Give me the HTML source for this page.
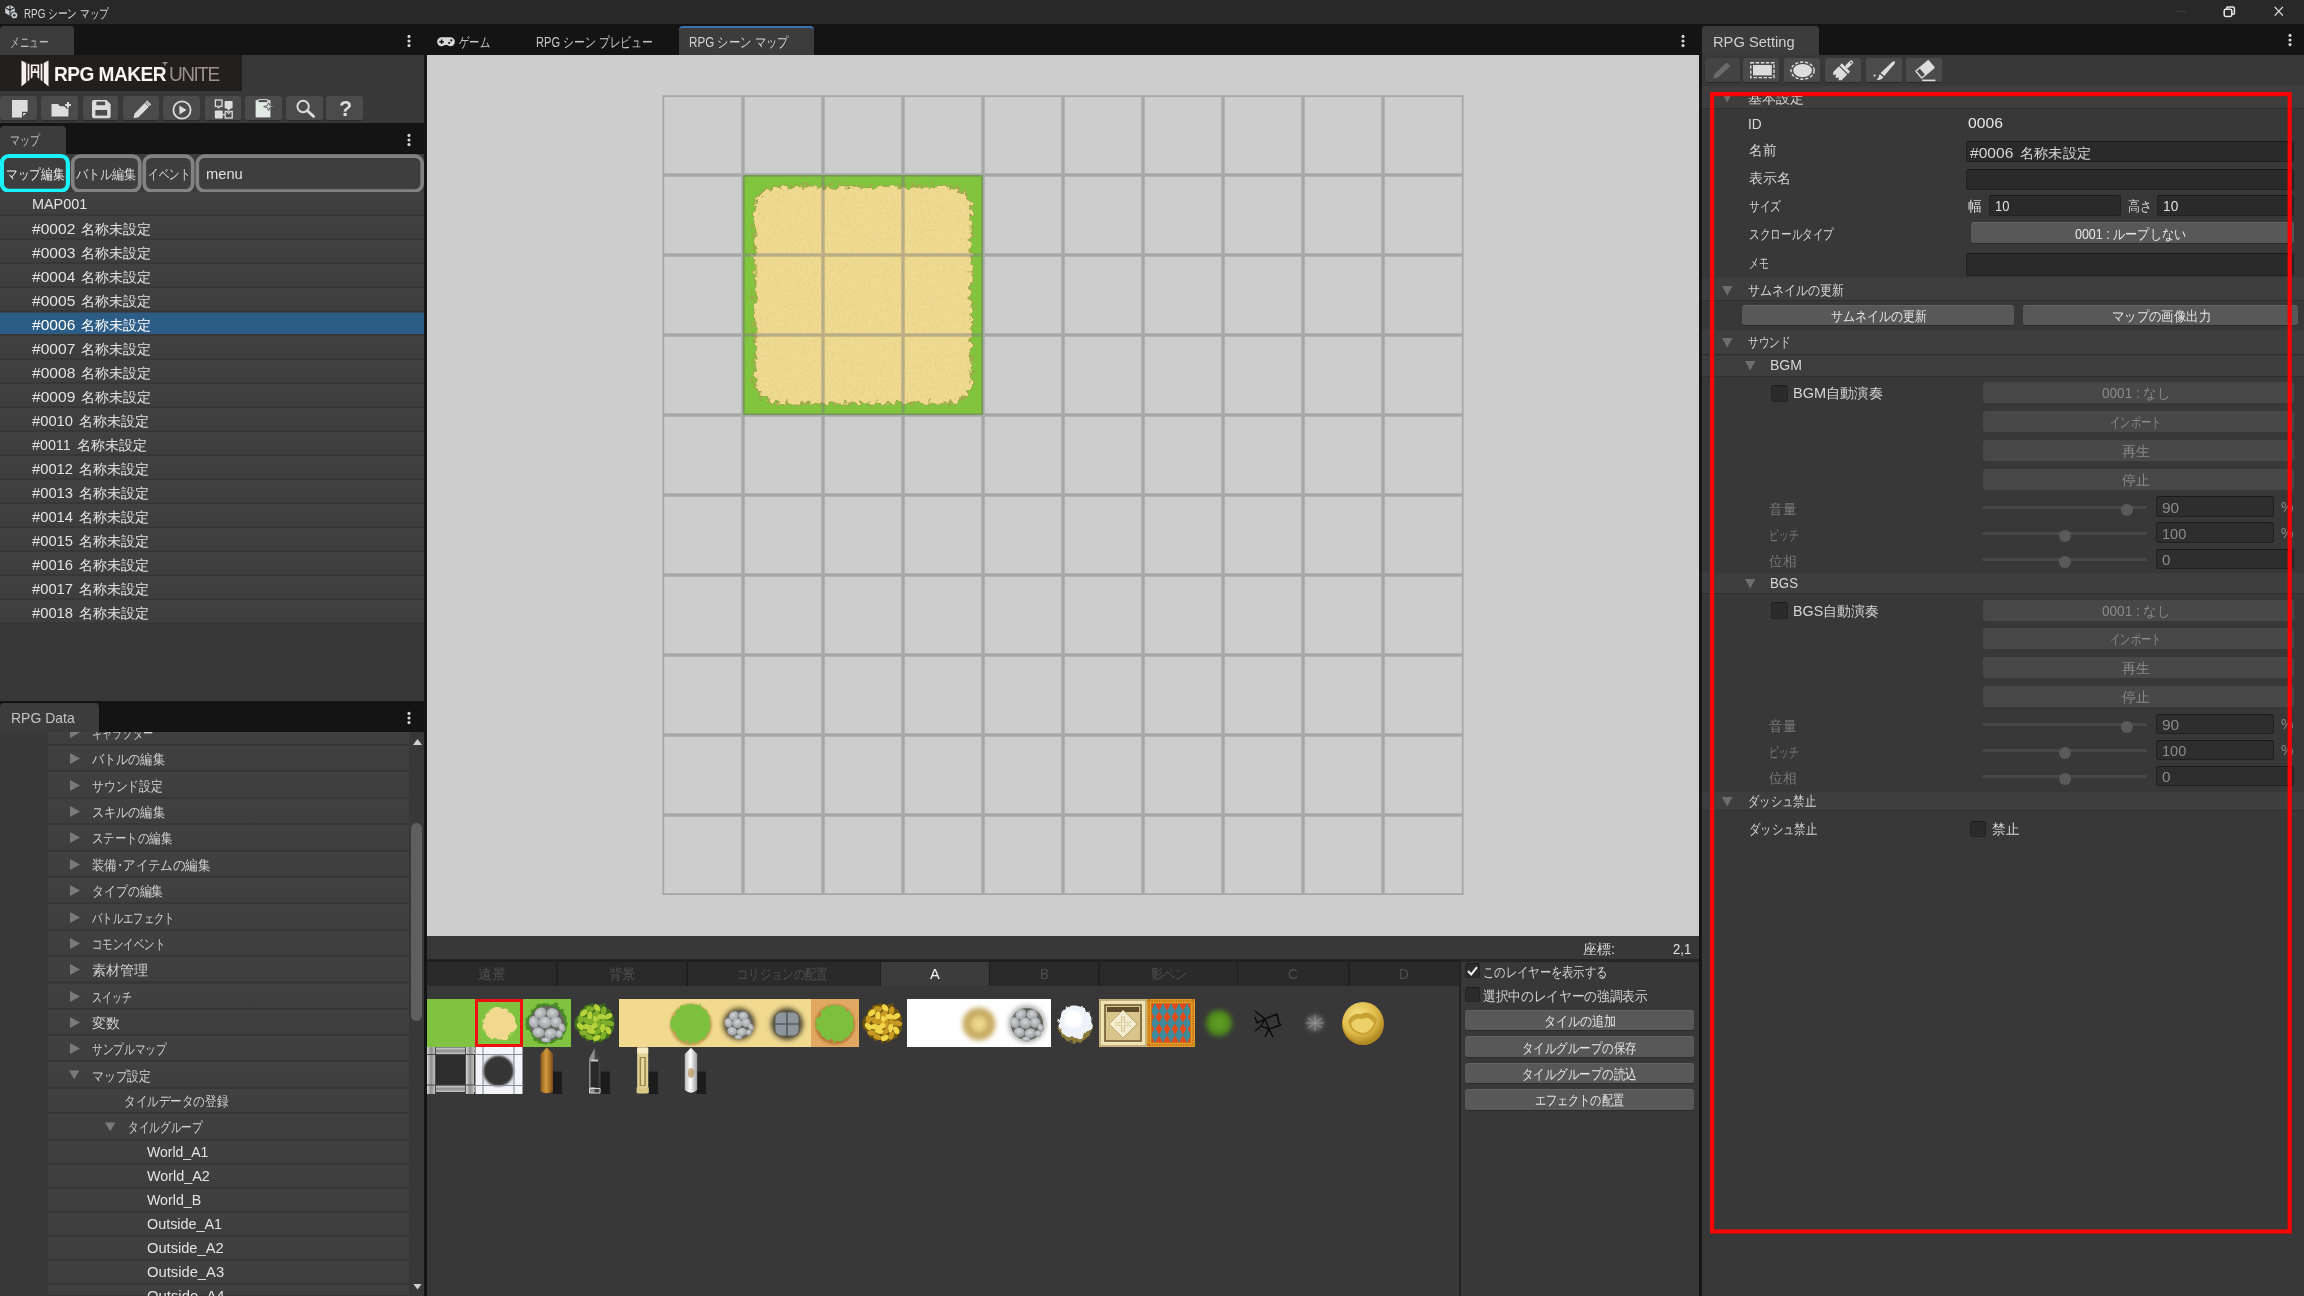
<!DOCTYPE html>
<html lang="ja"><head><meta charset="utf-8"><title>RPG シーン マップ</title>
<style>
html,body{margin:0;padding:0;background:#383838;}
body{width:2304px;height:1296px;position:relative;overflow:hidden;font-family:"Liberation Sans",sans-serif;font-size:14.4px;color:#d2d2d2;}
div{position:absolute;box-sizing:border-box;}
svg{position:absolute;overflow:visible;}
.t{height:24px;line-height:24px;white-space:nowrap;letter-spacing:0.45px;}
.j{letter-spacing:0;}
.row{left:0;width:424px;height:24px;background:linear-gradient(#414141,#3e3e3e);border-bottom:2px solid #373737;}
.trow{left:48px;width:360.7px;background:linear-gradient(#414141,#3e3e3e);border-bottom:2px solid #373737;}
.btn{background:#585858;border-radius:3px;border-top:1px solid #636363;border-bottom:1px solid #2b2b2b;color:#e4e4e4;text-align:center;white-space:nowrap;}
.dbtn{background:#484848;border-radius:3px;color:#8a8a8a;text-align:center;white-space:nowrap;}
.fld{background:#2a2a2a;border:1px solid #212121;border-top-color:#191919;border-radius:3px;white-space:nowrap;}
.tool{background:#4b4b4b;border-radius:3px;border-bottom:1px solid #2a2a2a;}
.chk{background:#2b2b2b;border:1px solid #242424;border-top-color:#1c1c1c;border-radius:3px;}
.hdr{background:#3e3e3e;border-bottom:1px solid #2f2f2f;}
</style></head>
<body>

<div style="left:0px;top:0px;width:2304px;height:24px;background:#282828;"></div>
<svg style="left:3px;top:4px" width="16" height="16" viewBox="0 0 16 16"><path d="M2.2 3.6 L7 1 L11.8 3.6 L11.8 9 L7 11.8 L2.2 9 Z" fill="#c9cdd3"/><path d="M7 1 L7 6.3 M2.2 3.6 L7 6.3 L11.8 3.6 M7 6.3 L7 11.8" stroke="#282828" stroke-width="1.1" fill="none"/><circle cx="11.3" cy="11.3" r="3.6" fill="#c9cdd3" stroke="#282828" stroke-width="1"/><circle cx="11.3" cy="11.3" r="1.3" fill="#282828"/></svg>
<div style="left:2175.6px;top:11px;width:10.8px;height:1.2px;background:#3d3d3d;"></div>
<svg style="left:2223px;top:6px" width="13" height="12" viewBox="0 0 13 12"><rect x="1.2" y="3.2" width="7.6" height="7.2" rx="1.6" fill="none" stroke="#e6e6e6" stroke-width="1.5"/><path d="M3.6 3 V2.2 Q3.6 1 4.8 1 H10 Q11.4 1 11.4 2.4 V7 Q11.4 8.2 10.2 8.2 H9" fill="none" stroke="#e6e6e6" stroke-width="1.5"/></svg>
<svg style="left:2273.8px;top:6.4px" width="9.6" height="10.5" viewBox="0 0 11 12"><path d="M0.8 1 L10.2 11 M10.2 1 L0.8 11" stroke="#e6e6e6" stroke-width="1.4" fill="none"/></svg>
<div style="left:0px;top:24px;width:2304px;height:31px;background:#141414;"></div>
<div style="left:424.2px;top:24px;width:2.8px;height:1272px;background:#151515;"></div>
<div style="left:1699px;top:24px;width:2.8px;height:1272px;background:#151515;"></div>
<div style="left:0px;top:26.3px;width:74px;height:29.2px;background:#3c3c3c;border-radius:4px 4px 0 0;"></div>
<svg style="left:406.5px;top:34px" width="4" height="14" viewBox="0 0 4 14"><circle cx="2" cy="2.4" r="1.55" fill="#d6d6d6"/><circle cx="2" cy="7" r="1.55" fill="#d6d6d6"/><circle cx="2" cy="11.6" r="1.55" fill="#d6d6d6"/></svg>
<div style="left:0px;top:55px;width:424px;height:69px;background:#383838;"></div>
<div style="left:0px;top:55px;width:242px;height:36px;background:#241f1f;"></div>
<div class="tool" style="left:0px;top:96px;width:37px;height:25px;"></div>
<div class="tool" style="left:41px;top:96px;width:37px;height:25px;"></div>
<div class="tool" style="left:82.5px;top:96px;width:35.5px;height:25px;"></div>
<div class="tool" style="left:123px;top:96px;width:36px;height:25px;"></div>
<div class="tool" style="left:163px;top:96px;width:37px;height:25px;"></div>
<div class="tool" style="left:204.5px;top:96px;width:36.0px;height:25px;"></div>
<div class="tool" style="left:245px;top:96px;width:36.5px;height:25px;"></div>
<div class="tool" style="left:285.5px;top:96px;width:37.0px;height:25px;"></div>
<div class="tool" style="left:326px;top:96px;width:37px;height:25px;"></div>
<div style="left:0px;top:123px;width:424px;height:31px;background:#141414;"></div>
<div style="left:0px;top:126px;width:66px;height:28px;background:#3c3c3c;border-radius:4px 4px 0 0;"></div>
<svg style="left:406.5px;top:133px" width="4" height="14" viewBox="0 0 4 14"><circle cx="2" cy="2.4" r="1.55" fill="#d6d6d6"/><circle cx="2" cy="7" r="1.55" fill="#d6d6d6"/><circle cx="2" cy="11.6" r="1.55" fill="#d6d6d6"/></svg>
<div style="left:0px;top:154px;width:424px;height:546px;background:#383838;"></div>
<div style="left:0px;top:153.6px;width:424px;height:39.4px;background:#3b3b3b;"></div>
<svg style="left:0;top:0" width="424" height="200" viewBox="0 0 424 200"><rect x="1.9000000000000001" y="156.0" width="66.0" height="34.8" rx="6.9" fill="#3e3e3e" stroke="#1af2fa" stroke-width="4.2"/><rect x="72.64999999999999" y="156.15" width="67.1" height="34.8" rx="7.15" fill="#3e3e3e" stroke="#828282" stroke-width="3.7"/><rect x="144.25" y="156.15" width="48.4" height="34.8" rx="7.15" fill="#3e3e3e" stroke="#828282" stroke-width="3.7"/><rect x="197.3" y="156.1" width="224.9" height="34.9" rx="7.2" fill="#3e3e3e" stroke="#828282" stroke-width="3.6"/></svg>
<div class="row" style="top:192.4px;"></div>
<div class="row" style="top:216.4px;"></div>
<div class="row" style="top:240.4px;"></div>
<div class="row" style="top:264.4px;"></div>
<div class="row" style="top:288.4px;"></div>
<div class="row" style="top:312.4px;background:#2c5d87;border-top:1px solid #37475a;"></div>
<div class="row" style="top:336.4px;"></div>
<div class="row" style="top:360.4px;"></div>
<div class="row" style="top:384.4px;"></div>
<div class="row" style="top:408.4px;"></div>
<div class="row" style="top:432.4px;"></div>
<div class="row" style="top:456.4px;"></div>
<div class="row" style="top:480.4px;"></div>
<div class="row" style="top:504.4px;"></div>
<div class="row" style="top:528.4px;"></div>
<div class="row" style="top:552.4px;"></div>
<div class="row" style="top:576.4px;"></div>
<div class="row" style="top:600.4px;"></div>
<div style="left:0px;top:701px;width:424px;height:31px;background:#141414;"></div>
<div style="left:0px;top:703px;width:99px;height:29px;background:#3c3c3c;border-radius:4px 4px 0 0;"></div>
<svg style="left:406.7px;top:710.8px" width="4" height="14" viewBox="0 0 4 14"><circle cx="2" cy="2.4" r="1.55" fill="#d6d6d6"/><circle cx="2" cy="7" r="1.55" fill="#d6d6d6"/><circle cx="2" cy="11.6" r="1.55" fill="#d6d6d6"/></svg>
<div style="left:0px;top:732px;width:424px;height:564px;background:#383838;"></div>
<div class="trow" style="top:732px;height:14px;"></div>
<div style="left:48px;top:732px;width:360px;height:12px;overflow:hidden;"><svg style="left:21.5px;top:-5px" width="10" height="11" viewBox="0 0 10 11"><path d="M0 0 L10 5.5 L0 11 Z" fill="#7a7a7a"/></svg></div>
<div class="trow" style="top:746px;height:26.3px;"></div>
<svg style="left:69.5px;top:753.05px" width="10" height="11" viewBox="0 0 10 11"><path d="M0 0 L10 5.5 L0 11 Z" fill="#7a7a7a"/></svg>
<div class="trow" style="top:772.3px;height:26.7px;"></div>
<svg style="left:69.5px;top:779.55px" width="10" height="11" viewBox="0 0 10 11"><path d="M0 0 L10 5.5 L0 11 Z" fill="#7a7a7a"/></svg>
<div class="trow" style="top:799px;height:26.3px;"></div>
<svg style="left:69.5px;top:806.05px" width="10" height="11" viewBox="0 0 10 11"><path d="M0 0 L10 5.5 L0 11 Z" fill="#7a7a7a"/></svg>
<div class="trow" style="top:825.3px;height:26.5px;"></div>
<svg style="left:69.5px;top:832.4499999999999px" width="10" height="11" viewBox="0 0 10 11"><path d="M0 0 L10 5.5 L0 11 Z" fill="#7a7a7a"/></svg>
<div class="trow" style="top:851.8px;height:26.2px;"></div>
<svg style="left:69.5px;top:858.8px" width="10" height="11" viewBox="0 0 10 11"><path d="M0 0 L10 5.5 L0 11 Z" fill="#7a7a7a"/></svg>
<div class="trow" style="top:878px;height:26.3px;"></div>
<svg style="left:69.5px;top:885.05px" width="10" height="11" viewBox="0 0 10 11"><path d="M0 0 L10 5.5 L0 11 Z" fill="#7a7a7a"/></svg>
<div class="trow" style="top:904.3px;height:26.7px;"></div>
<svg style="left:69.5px;top:911.55px" width="10" height="11" viewBox="0 0 10 11"><path d="M0 0 L10 5.5 L0 11 Z" fill="#7a7a7a"/></svg>
<div class="trow" style="top:931px;height:26.3px;"></div>
<svg style="left:69.5px;top:938.05px" width="10" height="11" viewBox="0 0 10 11"><path d="M0 0 L10 5.5 L0 11 Z" fill="#7a7a7a"/></svg>
<div class="trow" style="top:957.3px;height:26.2px;"></div>
<svg style="left:69.5px;top:964.3px" width="10" height="11" viewBox="0 0 10 11"><path d="M0 0 L10 5.5 L0 11 Z" fill="#7a7a7a"/></svg>
<div class="trow" style="top:983.5px;height:26.7px;"></div>
<svg style="left:69.5px;top:990.75px" width="10" height="11" viewBox="0 0 10 11"><path d="M0 0 L10 5.5 L0 11 Z" fill="#7a7a7a"/></svg>
<div class="trow" style="top:1010.2px;height:25.8px;"></div>
<svg style="left:69.5px;top:1017.0px" width="10" height="11" viewBox="0 0 10 11"><path d="M0 0 L10 5.5 L0 11 Z" fill="#7a7a7a"/></svg>
<div class="trow" style="top:1036px;height:26.3px;"></div>
<svg style="left:69.5px;top:1043.05px" width="10" height="11" viewBox="0 0 10 11"><path d="M0 0 L10 5.5 L0 11 Z" fill="#7a7a7a"/></svg>
<div class="trow" style="top:1062.3px;height:26.7px;"></div>
<svg style="left:69.2px;top:1070.05px" width="10.4" height="9.6" viewBox="0 0 12 10"><path d="M0 0 L12 0 L6 10 Z" fill="#7a7a7a"/></svg>
<div class="trow" style="top:1089px;height:25px;"></div>
<div class="trow" style="top:1114px;height:26.5px;"></div>
<svg style="left:104.5px;top:1121.6499999999999px" width="10.4" height="9.6" viewBox="0 0 12 10"><path d="M0 0 L12 0 L6 10 Z" fill="#7a7a7a"/></svg>
<div class="trow" style="top:1140.5px;height:24px;"></div>
<div class="trow" style="top:1164.5px;height:24px;"></div>
<div class="trow" style="top:1188.5px;height:24px;"></div>
<div class="trow" style="top:1212.5px;height:24px;"></div>
<div class="trow" style="top:1236.5px;height:24px;"></div>
<div class="trow" style="top:1260.5px;height:24px;"></div>
<div class="trow" style="top:1284.5px;height:12.5px;"></div>
<div style="left:408.7px;top:732px;width:15.3px;height:564px;background:#383838;"></div>
<svg style="left:412.5px;top:738.7px" width="9" height="6" viewBox="0 0 9 6"><path d="M0 6 L4.5 0 L9 6 Z" fill="#d0d0d0"/></svg>
<svg style="left:412.5px;top:1284px" width="9" height="5.5" viewBox="0 0 9 6"><path d="M0 0 L4.5 6 L9 0 Z" fill="#d0d0d0"/></svg>
<div style="left:411.2px;top:822.5px;width:11.3px;height:198px;background:#5f5f5f;border-radius:5.6px;"></div>
<svg style="left:437px;top:37px" width="18" height="10" viewBox="0 0 18 10"><path d="M4.6 0.3 H13.4 A4.4 4.4 0 0 1 13.4 9.2 Q11.6 9.2 10.6 7.9 H7.4 Q6.4 9.2 4.6 9.2 A4.4 4.4 0 0 1 4.6 0.3 Z" fill="#d8d8d8"/><path d="M4.6 2.4 V7 M2.3 4.7 H6.9" stroke="#141414" stroke-width="1.5"/><circle cx="14.3" cy="3.4" r="1.05" fill="#141414"/><circle cx="12.2" cy="5.9" r="1.05" fill="#141414"/></svg>
<div style="left:678.8px;top:26.3px;width:135.2px;height:28.7px;background:#3c3c3c;border-radius:4px 4px 0 0;border-top:2px solid #3a72b0;"></div>
<svg style="left:1681px;top:34px" width="4" height="14" viewBox="0 0 4 14"><circle cx="2" cy="2.4" r="1.55" fill="#d6d6d6"/><circle cx="2" cy="7" r="1.55" fill="#d6d6d6"/><circle cx="2" cy="11.6" r="1.55" fill="#d6d6d6"/></svg>
<div style="left:427px;top:55px;width:1272px;height:881px;background:#cdcdcd;"></div>
<svg style="left:743px;top:175px" width="240" height="240" viewBox="0 0 240 240"><defs><filter id="rg" x="-5%" y="-5%" width="110%" height="110%"><feTurbulence type="fractalNoise" baseFrequency="0.19" numOctaves="2" seed="4" result="n"/><feDisplacementMap in="SourceGraphic" in2="n" scale="12" xChannelSelector="R" yChannelSelector="G"/></filter><filter id="tx" x="0" y="0" width="100%" height="100%"><feTurbulence type="fractalNoise" baseFrequency="0.35" numOctaves="2" seed="9"/><feColorMatrix type="matrix" values="0 0 0 0 0.55  0 0 0 0 0.42  0 0 0 0 0.12  0.9 0 0 -0.38 0"/><feComposite in2="SourceGraphic" operator="in"/></filter></defs><rect width="240" height="240" fill="#81c53e"/><rect x="0.75" y="0.75" width="238.5" height="238.5" fill="none" stroke="#72b238" stroke-width="1.5"/><rect x="10.5" y="10.5" width="219" height="219" rx="24" fill="#a3a548" filter="url(#rg)" opacity="0.85"/><rect x="12.5" y="12.5" width="215" height="215" rx="23" fill="#f1dc93" filter="url(#rg)"/><rect x="12.5" y="12.5" width="215" height="215" rx="23" fill="#f1dc93" filter="url(#tx)" opacity="0.3"/></svg>
<svg style="left:0;top:0" width="2304" height="1296" viewBox="0 0 2304 1296" shape-rendering="geometricPrecision"><rect x="662.4" y="95.2" width="1.8" height="799.8" fill="rgba(122,122,122,0.46)"/><rect x="741.3" y="95.2" width="3.4" height="799.8" fill="rgba(122,122,122,0.46)"/><rect x="821.3" y="95.2" width="3.4" height="799.8" fill="rgba(122,122,122,0.46)"/><rect x="901.3" y="95.2" width="3.4" height="799.8" fill="rgba(122,122,122,0.46)"/><rect x="981.3" y="95.2" width="3.4" height="799.8" fill="rgba(122,122,122,0.46)"/><rect x="1061.3" y="95.2" width="3.4" height="799.8" fill="rgba(122,122,122,0.46)"/><rect x="1141.3" y="95.2" width="3.4" height="799.8" fill="rgba(122,122,122,0.46)"/><rect x="1221.3" y="95.2" width="3.4" height="799.8" fill="rgba(122,122,122,0.46)"/><rect x="1301.3" y="95.2" width="3.4" height="799.8" fill="rgba(122,122,122,0.46)"/><rect x="1381.3" y="95.2" width="3.4" height="799.8" fill="rgba(122,122,122,0.46)"/><rect x="1461.8" y="95.2" width="1.8" height="799.8" fill="rgba(122,122,122,0.46)"/><rect x="664.2" y="95.2" width="77.1" height="1.8" fill="rgba(122,122,122,0.46)"/><rect x="744.7" y="95.2" width="76.6" height="1.8" fill="rgba(122,122,122,0.46)"/><rect x="824.7" y="95.2" width="76.6" height="1.8" fill="rgba(122,122,122,0.46)"/><rect x="904.7" y="95.2" width="76.6" height="1.8" fill="rgba(122,122,122,0.46)"/><rect x="984.7" y="95.2" width="76.6" height="1.8" fill="rgba(122,122,122,0.46)"/><rect x="1064.7" y="95.2" width="76.6" height="1.8" fill="rgba(122,122,122,0.46)"/><rect x="1144.7" y="95.2" width="76.6" height="1.8" fill="rgba(122,122,122,0.46)"/><rect x="1224.7" y="95.2" width="76.6" height="1.8" fill="rgba(122,122,122,0.46)"/><rect x="1304.7" y="95.2" width="76.6" height="1.8" fill="rgba(122,122,122,0.46)"/><rect x="1384.7" y="95.2" width="77.1" height="1.8" fill="rgba(122,122,122,0.46)"/><rect x="664.2" y="173.3" width="77.1" height="3.4" fill="rgba(122,122,122,0.46)"/><rect x="744.7" y="173.3" width="76.6" height="3.4" fill="rgba(122,122,122,0.46)"/><rect x="824.7" y="173.3" width="76.6" height="3.4" fill="rgba(122,122,122,0.46)"/><rect x="904.7" y="173.3" width="76.6" height="3.4" fill="rgba(122,122,122,0.46)"/><rect x="984.7" y="173.3" width="76.6" height="3.4" fill="rgba(122,122,122,0.46)"/><rect x="1064.7" y="173.3" width="76.6" height="3.4" fill="rgba(122,122,122,0.46)"/><rect x="1144.7" y="173.3" width="76.6" height="3.4" fill="rgba(122,122,122,0.46)"/><rect x="1224.7" y="173.3" width="76.6" height="3.4" fill="rgba(122,122,122,0.46)"/><rect x="1304.7" y="173.3" width="76.6" height="3.4" fill="rgba(122,122,122,0.46)"/><rect x="1384.7" y="173.3" width="77.1" height="3.4" fill="rgba(122,122,122,0.46)"/><rect x="664.2" y="253.3" width="77.1" height="3.4" fill="rgba(122,122,122,0.46)"/><rect x="744.7" y="253.3" width="76.6" height="3.4" fill="rgba(122,122,122,0.46)"/><rect x="824.7" y="253.3" width="76.6" height="3.4" fill="rgba(122,122,122,0.46)"/><rect x="904.7" y="253.3" width="76.6" height="3.4" fill="rgba(122,122,122,0.46)"/><rect x="984.7" y="253.3" width="76.6" height="3.4" fill="rgba(122,122,122,0.46)"/><rect x="1064.7" y="253.3" width="76.6" height="3.4" fill="rgba(122,122,122,0.46)"/><rect x="1144.7" y="253.3" width="76.6" height="3.4" fill="rgba(122,122,122,0.46)"/><rect x="1224.7" y="253.3" width="76.6" height="3.4" fill="rgba(122,122,122,0.46)"/><rect x="1304.7" y="253.3" width="76.6" height="3.4" fill="rgba(122,122,122,0.46)"/><rect x="1384.7" y="253.3" width="77.1" height="3.4" fill="rgba(122,122,122,0.46)"/><rect x="664.2" y="333.3" width="77.1" height="3.4" fill="rgba(122,122,122,0.46)"/><rect x="744.7" y="333.3" width="76.6" height="3.4" fill="rgba(122,122,122,0.46)"/><rect x="824.7" y="333.3" width="76.6" height="3.4" fill="rgba(122,122,122,0.46)"/><rect x="904.7" y="333.3" width="76.6" height="3.4" fill="rgba(122,122,122,0.46)"/><rect x="984.7" y="333.3" width="76.6" height="3.4" fill="rgba(122,122,122,0.46)"/><rect x="1064.7" y="333.3" width="76.6" height="3.4" fill="rgba(122,122,122,0.46)"/><rect x="1144.7" y="333.3" width="76.6" height="3.4" fill="rgba(122,122,122,0.46)"/><rect x="1224.7" y="333.3" width="76.6" height="3.4" fill="rgba(122,122,122,0.46)"/><rect x="1304.7" y="333.3" width="76.6" height="3.4" fill="rgba(122,122,122,0.46)"/><rect x="1384.7" y="333.3" width="77.1" height="3.4" fill="rgba(122,122,122,0.46)"/><rect x="664.2" y="413.3" width="77.1" height="3.4" fill="rgba(122,122,122,0.46)"/><rect x="744.7" y="413.3" width="76.6" height="3.4" fill="rgba(122,122,122,0.46)"/><rect x="824.7" y="413.3" width="76.6" height="3.4" fill="rgba(122,122,122,0.46)"/><rect x="904.7" y="413.3" width="76.6" height="3.4" fill="rgba(122,122,122,0.46)"/><rect x="984.7" y="413.3" width="76.6" height="3.4" fill="rgba(122,122,122,0.46)"/><rect x="1064.7" y="413.3" width="76.6" height="3.4" fill="rgba(122,122,122,0.46)"/><rect x="1144.7" y="413.3" width="76.6" height="3.4" fill="rgba(122,122,122,0.46)"/><rect x="1224.7" y="413.3" width="76.6" height="3.4" fill="rgba(122,122,122,0.46)"/><rect x="1304.7" y="413.3" width="76.6" height="3.4" fill="rgba(122,122,122,0.46)"/><rect x="1384.7" y="413.3" width="77.1" height="3.4" fill="rgba(122,122,122,0.46)"/><rect x="664.2" y="493.3" width="77.1" height="3.4" fill="rgba(122,122,122,0.46)"/><rect x="744.7" y="493.3" width="76.6" height="3.4" fill="rgba(122,122,122,0.46)"/><rect x="824.7" y="493.3" width="76.6" height="3.4" fill="rgba(122,122,122,0.46)"/><rect x="904.7" y="493.3" width="76.6" height="3.4" fill="rgba(122,122,122,0.46)"/><rect x="984.7" y="493.3" width="76.6" height="3.4" fill="rgba(122,122,122,0.46)"/><rect x="1064.7" y="493.3" width="76.6" height="3.4" fill="rgba(122,122,122,0.46)"/><rect x="1144.7" y="493.3" width="76.6" height="3.4" fill="rgba(122,122,122,0.46)"/><rect x="1224.7" y="493.3" width="76.6" height="3.4" fill="rgba(122,122,122,0.46)"/><rect x="1304.7" y="493.3" width="76.6" height="3.4" fill="rgba(122,122,122,0.46)"/><rect x="1384.7" y="493.3" width="77.1" height="3.4" fill="rgba(122,122,122,0.46)"/><rect x="664.2" y="573.3" width="77.1" height="3.4" fill="rgba(122,122,122,0.46)"/><rect x="744.7" y="573.3" width="76.6" height="3.4" fill="rgba(122,122,122,0.46)"/><rect x="824.7" y="573.3" width="76.6" height="3.4" fill="rgba(122,122,122,0.46)"/><rect x="904.7" y="573.3" width="76.6" height="3.4" fill="rgba(122,122,122,0.46)"/><rect x="984.7" y="573.3" width="76.6" height="3.4" fill="rgba(122,122,122,0.46)"/><rect x="1064.7" y="573.3" width="76.6" height="3.4" fill="rgba(122,122,122,0.46)"/><rect x="1144.7" y="573.3" width="76.6" height="3.4" fill="rgba(122,122,122,0.46)"/><rect x="1224.7" y="573.3" width="76.6" height="3.4" fill="rgba(122,122,122,0.46)"/><rect x="1304.7" y="573.3" width="76.6" height="3.4" fill="rgba(122,122,122,0.46)"/><rect x="1384.7" y="573.3" width="77.1" height="3.4" fill="rgba(122,122,122,0.46)"/><rect x="664.2" y="653.3" width="77.1" height="3.4" fill="rgba(122,122,122,0.46)"/><rect x="744.7" y="653.3" width="76.6" height="3.4" fill="rgba(122,122,122,0.46)"/><rect x="824.7" y="653.3" width="76.6" height="3.4" fill="rgba(122,122,122,0.46)"/><rect x="904.7" y="653.3" width="76.6" height="3.4" fill="rgba(122,122,122,0.46)"/><rect x="984.7" y="653.3" width="76.6" height="3.4" fill="rgba(122,122,122,0.46)"/><rect x="1064.7" y="653.3" width="76.6" height="3.4" fill="rgba(122,122,122,0.46)"/><rect x="1144.7" y="653.3" width="76.6" height="3.4" fill="rgba(122,122,122,0.46)"/><rect x="1224.7" y="653.3" width="76.6" height="3.4" fill="rgba(122,122,122,0.46)"/><rect x="1304.7" y="653.3" width="76.6" height="3.4" fill="rgba(122,122,122,0.46)"/><rect x="1384.7" y="653.3" width="77.1" height="3.4" fill="rgba(122,122,122,0.46)"/><rect x="664.2" y="733.3" width="77.1" height="3.4" fill="rgba(122,122,122,0.46)"/><rect x="744.7" y="733.3" width="76.6" height="3.4" fill="rgba(122,122,122,0.46)"/><rect x="824.7" y="733.3" width="76.6" height="3.4" fill="rgba(122,122,122,0.46)"/><rect x="904.7" y="733.3" width="76.6" height="3.4" fill="rgba(122,122,122,0.46)"/><rect x="984.7" y="733.3" width="76.6" height="3.4" fill="rgba(122,122,122,0.46)"/><rect x="1064.7" y="733.3" width="76.6" height="3.4" fill="rgba(122,122,122,0.46)"/><rect x="1144.7" y="733.3" width="76.6" height="3.4" fill="rgba(122,122,122,0.46)"/><rect x="1224.7" y="733.3" width="76.6" height="3.4" fill="rgba(122,122,122,0.46)"/><rect x="1304.7" y="733.3" width="76.6" height="3.4" fill="rgba(122,122,122,0.46)"/><rect x="1384.7" y="733.3" width="77.1" height="3.4" fill="rgba(122,122,122,0.46)"/><rect x="664.2" y="813.3" width="77.1" height="3.4" fill="rgba(122,122,122,0.46)"/><rect x="744.7" y="813.3" width="76.6" height="3.4" fill="rgba(122,122,122,0.46)"/><rect x="824.7" y="813.3" width="76.6" height="3.4" fill="rgba(122,122,122,0.46)"/><rect x="904.7" y="813.3" width="76.6" height="3.4" fill="rgba(122,122,122,0.46)"/><rect x="984.7" y="813.3" width="76.6" height="3.4" fill="rgba(122,122,122,0.46)"/><rect x="1064.7" y="813.3" width="76.6" height="3.4" fill="rgba(122,122,122,0.46)"/><rect x="1144.7" y="813.3" width="76.6" height="3.4" fill="rgba(122,122,122,0.46)"/><rect x="1224.7" y="813.3" width="76.6" height="3.4" fill="rgba(122,122,122,0.46)"/><rect x="1304.7" y="813.3" width="76.6" height="3.4" fill="rgba(122,122,122,0.46)"/><rect x="1384.7" y="813.3" width="77.1" height="3.4" fill="rgba(122,122,122,0.46)"/><rect x="664.2" y="893.2" width="77.1" height="1.8" fill="rgba(122,122,122,0.46)"/><rect x="744.7" y="893.2" width="76.6" height="1.8" fill="rgba(122,122,122,0.46)"/><rect x="824.7" y="893.2" width="76.6" height="1.8" fill="rgba(122,122,122,0.46)"/><rect x="904.7" y="893.2" width="76.6" height="1.8" fill="rgba(122,122,122,0.46)"/><rect x="984.7" y="893.2" width="76.6" height="1.8" fill="rgba(122,122,122,0.46)"/><rect x="1064.7" y="893.2" width="76.6" height="1.8" fill="rgba(122,122,122,0.46)"/><rect x="1144.7" y="893.2" width="76.6" height="1.8" fill="rgba(122,122,122,0.46)"/><rect x="1224.7" y="893.2" width="76.6" height="1.8" fill="rgba(122,122,122,0.46)"/><rect x="1304.7" y="893.2" width="76.6" height="1.8" fill="rgba(122,122,122,0.46)"/><rect x="1384.7" y="893.2" width="77.1" height="1.8" fill="rgba(122,122,122,0.46)"/></svg>
<div style="left:427px;top:936px;width:1272px;height:24px;background:#383838;"></div>
<div style="left:427px;top:959px;width:1272px;height:2.5px;background:#262626;"></div>
<div style="left:427px;top:961.5px;width:1272px;height:334.5px;background:#383838;"></div>
<div style="left:427px;top:960px;width:1032px;height:26px;background:#1f1f1f;"></div>
<div style="left:427px;top:962px;width:129px;height:23.5px;background:#2a2a2a;"></div>
<div style="left:558px;top:962px;width:128.4px;height:23.5px;background:#2a2a2a;"></div>
<div style="left:688px;top:962px;width:191.5px;height:23.5px;background:#2a2a2a;"></div>
<div style="left:880.7px;top:962px;width:108.3px;height:24px;background:#3c3c3c;"></div>
<div style="left:990.3px;top:962px;width:108.2px;height:23.5px;background:#2a2a2a;"></div>
<div style="left:1099.8px;top:962px;width:136.9px;height:23.5px;background:#2a2a2a;"></div>
<div style="left:1238px;top:962px;width:110.3px;height:23.5px;background:#2a2a2a;"></div>
<div style="left:1349.5px;top:962px;width:109.0px;height:23.5px;background:#2a2a2a;"></div>
<div style="left:1459px;top:961px;width:2px;height:335px;background:#242424;"></div>
<div class="chk" style="left:1465px;top:963px;width:15px;height:15px;"></div>
<svg style="left:1467px;top:966px" width="11" height="10" viewBox="0 0 11 10"><path d="M1 5 L4.2 8.4 L10 1.2" stroke="#f2f2f2" stroke-width="2" fill="none"/></svg>
<div class="chk" style="left:1465px;top:987px;width:15px;height:15px;"></div>
<div class="btn" style="left:1465px;top:1010px;width:229px;height:21.3px;"></div>
<div class="btn" style="left:1465px;top:1036.4px;width:229px;height:21.4px;"></div>
<div class="btn" style="left:1465px;top:1063px;width:229px;height:21.2px;"></div>
<div class="btn" style="left:1465px;top:1089px;width:229px;height:21.5px;"></div>
<svg width="0" height="0" style="left:0;top:0"><defs><filter id="b1" x="-20%" y="-20%" width="140%" height="140%"><feGaussianBlur stdDeviation="1.2"/></filter><filter id="b2" x="-30%" y="-30%" width="160%" height="160%"><feGaussianBlur stdDeviation="2.6"/></filter><filter id="b3" x="-30%" y="-30%" width="160%" height="160%"><feGaussianBlur stdDeviation="4"/></filter><filter id="rg2" x="-10%" y="-10%" width="120%" height="120%"><feTurbulence type="fractalNoise" baseFrequency="0.16" numOctaves="2" seed="7" result="n"/><feDisplacementMap in="SourceGraphic" in2="n" scale="7" xChannelSelector="R" yChannelSelector="G"/></filter><radialGradient id="stn" cx="0.45" cy="0.4" r="0.6"><stop offset="0" stop-color="#d2d4d6"/><stop offset="1" stop-color="#9a9ea2"/></radialGradient><radialGradient id="gold" cx="0.4" cy="0.35" r="0.7"><stop offset="0" stop-color="#f6e48a"/><stop offset="0.6" stop-color="#e0bc4a"/><stop offset="1" stop-color="#a8821e"/></radialGradient><linearGradient id="wood" x1="0" x2="1"><stop offset="0" stop-color="#8a5a1c"/><stop offset="0.45" stop-color="#d29a3c"/><stop offset="1" stop-color="#7a4c14"/></linearGradient><linearGradient id="cry" x1="0" x2="1"><stop offset="0" stop-color="#b8b8b8"/><stop offset="0.45" stop-color="#ffffff"/><stop offset="1" stop-color="#9a9a9a"/></linearGradient><linearGradient id="met" x1="0" x2="0" y1="0" y2="1"><stop offset="0" stop-color="#d8d8d8"/><stop offset="0.5" stop-color="#8c8c8c"/><stop offset="1" stop-color="#c2c2c2"/></linearGradient><linearGradient id="metv" x1="0" x2="1" y1="0" y2="0"><stop offset="0" stop-color="#d8d8d8"/><stop offset="0.5" stop-color="#8c8c8c"/><stop offset="1" stop-color="#c2c2c2"/></linearGradient><pattern id="carp" width="8" height="12" patternUnits="userSpaceOnUse"><rect width="8" height="12" fill="#3f8b9a"/><path d="M4 0.5 L7.4 6 L4 11.5 L0.6 6 Z" fill="#e24a1c"/></pattern></defs></svg>
<svg style="left:427px;top:999px" width="48" height="48" viewBox="0 0 48 48"><rect width="48" height="48" fill="#80c340"/></svg>
<svg style="left:475px;top:999px" width="48" height="48" viewBox="0 0 48 48"><rect width="48" height="48" fill="#80c340"/><circle cx="24" cy="25" r="16.5" fill="#f0d98f" filter="url(#rg2)"/><rect x="1.5" y="1.5" width="45" height="45" fill="none" stroke="#ee1010" stroke-width="3"/></svg>
<svg style="left:523px;top:999px" width="48" height="48" viewBox="0 0 48 48"><rect width="48" height="48" fill="#80c340"/><circle cx="24" cy="24.5" r="20.5" fill="#4c8a2a" filter="url(#rg2)"/><circle cx="24" cy="24.5" r="17.5" fill="#66675f"/><ellipse cx="17.5" cy="14.0" rx="6.2" ry="5.2" fill="url(#stn)" transform="rotate(-30 17.5 14.0)"/><ellipse cx="29.5" cy="14.5" rx="6.0" ry="5.4" fill="url(#stn)" transform="rotate(7 29.5 14.5)"/><ellipse cx="11.0" cy="23.0" rx="5.0" ry="6.0" fill="url(#stn)" transform="rotate(-16 11.0 23.0)"/><ellipse cx="22.0" cy="23.5" rx="6.4" ry="6.0" fill="url(#stn)" transform="rotate(21 22.0 23.5)"/><ellipse cx="33.0" cy="23.0" rx="5.6" ry="5.6" fill="url(#stn)" transform="rotate(-2 33.0 23.0)"/><ellipse cx="39.0" cy="28.5" rx="3.2" ry="4.4" fill="url(#stn)" transform="rotate(-25 39.0 28.5)"/><ellipse cx="15.5" cy="33.5" rx="6.0" ry="5.2" fill="url(#stn)" transform="rotate(12 15.5 33.5)"/><ellipse cx="27.5" cy="34.5" rx="6.2" ry="5.2" fill="url(#stn)" transform="rotate(-11 27.5 34.5)"/><ellipse cx="36.0" cy="35.0" rx="3.6" ry="3.6" fill="url(#stn)" transform="rotate(26 36.0 35.0)"/><ellipse cx="23.0" cy="41.0" rx="4.6" ry="2.6" fill="url(#stn)" transform="rotate(3 23.0 41.0)"/></svg>
<svg style="left:571px;top:999px" width="48" height="48" viewBox="0 0 48 48"><circle cx="24" cy="24" r="19.5" fill="#3f6e1c" filter="url(#rg2)"/><ellipse cx="12.6" cy="33.8" rx="4.2" ry="2.7" fill="#7fae2a" transform="rotate(0 12.6 33.8)"/><ellipse cx="9.4" cy="27.3" rx="4.2" ry="2.7" fill="#b6d23a" transform="rotate(47 9.4 27.3)"/><ellipse cx="9.5" cy="20.2" rx="4.2" ry="2.7" fill="#7fae2a" transform="rotate(94 9.5 20.2)"/><ellipse cx="12.9" cy="13.9" rx="4.2" ry="2.7" fill="#b6d23a" transform="rotate(141 12.9 13.9)"/><ellipse cx="18.9" cy="9.9" rx="4.2" ry="2.7" fill="#7fae2a" transform="rotate(8 18.9 9.9)"/><ellipse cx="26.1" cy="9.1" rx="4.2" ry="2.7" fill="#b6d23a" transform="rotate(55 26.1 9.1)"/><ellipse cx="32.7" cy="11.8" rx="4.2" ry="2.7" fill="#7fae2a" transform="rotate(102 32.7 11.8)"/><ellipse cx="37.4" cy="17.3" rx="4.2" ry="2.7" fill="#b6d23a" transform="rotate(149 37.4 17.3)"/><ellipse cx="39.0" cy="24.3" rx="4.2" ry="2.7" fill="#7fae2a" transform="rotate(16 39.0 24.3)"/><ellipse cx="37.2" cy="31.2" rx="4.2" ry="2.7" fill="#b6d23a" transform="rotate(63 37.2 31.2)"/><ellipse cx="32.3" cy="36.5" rx="4.2" ry="2.7" fill="#7fae2a" transform="rotate(110 32.3 36.5)"/><ellipse cx="25.6" cy="38.9" rx="4.2" ry="2.7" fill="#b6d23a" transform="rotate(157 25.6 38.9)"/><ellipse cx="18.4" cy="37.9" rx="4.2" ry="2.7" fill="#7fae2a" transform="rotate(24 18.4 37.9)"/><ellipse cx="15.8" cy="27.7" rx="4.2" ry="2.7" fill="#b6d23a" transform="rotate(0 15.8 27.7)"/><ellipse cx="15.3" cy="21.6" rx="4.2" ry="2.7" fill="#7fae2a" transform="rotate(47 15.3 21.6)"/><ellipse cx="18.9" cy="16.6" rx="4.2" ry="2.7" fill="#b6d23a" transform="rotate(94 18.9 16.6)"/><ellipse cx="24.9" cy="15.0" rx="4.2" ry="2.7" fill="#7fae2a" transform="rotate(141 24.9 15.0)"/><ellipse cx="30.4" cy="17.7" rx="4.2" ry="2.7" fill="#b6d23a" transform="rotate(8 30.4 17.7)"/><ellipse cx="33.0" cy="23.3" rx="4.2" ry="2.7" fill="#7fae2a" transform="rotate(55 33.0 23.3)"/><ellipse cx="31.3" cy="29.2" rx="4.2" ry="2.7" fill="#b6d23a" transform="rotate(102 31.3 29.2)"/><ellipse cx="26.2" cy="32.7" rx="4.2" ry="2.7" fill="#7fae2a" transform="rotate(149 26.2 32.7)"/><ellipse cx="20.1" cy="32.1" rx="4.2" ry="2.7" fill="#b6d23a" transform="rotate(16 20.1 32.1)"/><ellipse cx="20.7" cy="22.8" rx="4.2" ry="2.7" fill="#7fae2a" transform="rotate(0 20.7 22.8)"/><ellipse cx="25.2" cy="20.7" rx="4.2" ry="2.7" fill="#b6d23a" transform="rotate(47 25.2 20.7)"/><ellipse cx="27.3" cy="25.2" rx="4.2" ry="2.7" fill="#7fae2a" transform="rotate(94 27.3 25.2)"/><ellipse cx="22.8" cy="27.3" rx="4.2" ry="2.7" fill="#b6d23a" transform="rotate(141 22.8 27.3)"/></svg>
<svg style="left:619px;top:999px" width="48" height="48" viewBox="0 0 48 48"><rect width="48" height="48" fill="#f1da90"/></svg>
<svg style="left:667px;top:999px" width="48" height="48" viewBox="0 0 48 48"><rect width="48" height="48" fill="#f1da90"/><circle cx="24" cy="25.5" r="21" fill="#c0a050" filter="url(#b1)"/><circle cx="24" cy="24.5" r="19.5" fill="#7cc03d" filter="url(#rg2)"/></svg>
<svg style="left:715px;top:999px" width="48" height="48" viewBox="0 0 48 48"><rect width="48" height="48" fill="#f1da90"/><circle cx="24" cy="25" r="16.0" fill="#55482a" filter="url(#b2)"/><circle cx="24" cy="25" r="14.0" fill="#66675f"/><ellipse cx="18.8" cy="16.6" rx="5.0" ry="4.2" fill="url(#stn)" transform="rotate(-30 18.8 16.6)"/><ellipse cx="28.4" cy="17.0" rx="4.8" ry="4.3" fill="url(#stn)" transform="rotate(7 28.4 17.0)"/><ellipse cx="13.6" cy="23.8" rx="4.0" ry="4.8" fill="url(#stn)" transform="rotate(-16 13.6 23.8)"/><ellipse cx="22.4" cy="24.2" rx="5.1" ry="4.8" fill="url(#stn)" transform="rotate(21 22.4 24.2)"/><ellipse cx="31.2" cy="23.8" rx="4.5" ry="4.5" fill="url(#stn)" transform="rotate(-2 31.2 23.8)"/><ellipse cx="36.0" cy="28.2" rx="2.6" ry="3.5" fill="url(#stn)" transform="rotate(-25 36.0 28.2)"/><ellipse cx="17.2" cy="32.2" rx="4.8" ry="4.2" fill="url(#stn)" transform="rotate(12 17.2 32.2)"/><ellipse cx="26.8" cy="33.0" rx="5.0" ry="4.2" fill="url(#stn)" transform="rotate(-11 26.8 33.0)"/><ellipse cx="33.6" cy="33.4" rx="2.9" ry="2.9" fill="url(#stn)" transform="rotate(26 33.6 33.4)"/><ellipse cx="23.2" cy="38.2" rx="3.7" ry="2.1" fill="url(#stn)" transform="rotate(3 23.2 38.2)"/></svg>
<svg style="left:763px;top:999px" width="48" height="48" viewBox="0 0 48 48"><rect width="48" height="48" fill="#f1da90"/><circle cx="24" cy="25" r="16" fill="#4a4230" filter="url(#b2)"/><rect x="12" y="13" width="24" height="24" rx="6" fill="#8e949c"/><path d="M24 13 V37 M12 25 H36" stroke="#555a60" stroke-width="1.6"/><rect x="12" y="13" width="24" height="24" rx="6" fill="none" stroke="#5a5648" stroke-width="1"/></svg>
<svg style="left:811px;top:999px" width="48" height="48" viewBox="0 0 48 48"><rect width="48" height="48" fill="#e0a862"/><circle cx="24" cy="25.5" r="20" fill="#b77c38" filter="url(#b1)"/><circle cx="24" cy="24.5" r="18.5" fill="#7cc03d" filter="url(#rg2)"/></svg>
<svg style="left:859px;top:999px" width="48" height="48" viewBox="0 0 48 48"><circle cx="24" cy="24" r="19.5" fill="#6e5410" filter="url(#rg2)"/><ellipse cx="12.6" cy="33.8" rx="4.2" ry="2.7" fill="#c69a22" transform="rotate(0 12.6 33.8)"/><ellipse cx="9.4" cy="27.3" rx="4.2" ry="2.7" fill="#f2d64a" transform="rotate(47 9.4 27.3)"/><ellipse cx="9.5" cy="20.2" rx="4.2" ry="2.7" fill="#c69a22" transform="rotate(94 9.5 20.2)"/><ellipse cx="12.9" cy="13.9" rx="4.2" ry="2.7" fill="#f2d64a" transform="rotate(141 12.9 13.9)"/><ellipse cx="18.9" cy="9.9" rx="4.2" ry="2.7" fill="#c69a22" transform="rotate(8 18.9 9.9)"/><ellipse cx="26.1" cy="9.1" rx="4.2" ry="2.7" fill="#f2d64a" transform="rotate(55 26.1 9.1)"/><ellipse cx="32.7" cy="11.8" rx="4.2" ry="2.7" fill="#c69a22" transform="rotate(102 32.7 11.8)"/><ellipse cx="37.4" cy="17.3" rx="4.2" ry="2.7" fill="#f2d64a" transform="rotate(149 37.4 17.3)"/><ellipse cx="39.0" cy="24.3" rx="4.2" ry="2.7" fill="#c69a22" transform="rotate(16 39.0 24.3)"/><ellipse cx="37.2" cy="31.2" rx="4.2" ry="2.7" fill="#f2d64a" transform="rotate(63 37.2 31.2)"/><ellipse cx="32.3" cy="36.5" rx="4.2" ry="2.7" fill="#c69a22" transform="rotate(110 32.3 36.5)"/><ellipse cx="25.6" cy="38.9" rx="4.2" ry="2.7" fill="#f2d64a" transform="rotate(157 25.6 38.9)"/><ellipse cx="18.4" cy="37.9" rx="4.2" ry="2.7" fill="#c69a22" transform="rotate(24 18.4 37.9)"/><ellipse cx="15.8" cy="27.7" rx="4.2" ry="2.7" fill="#f2d64a" transform="rotate(0 15.8 27.7)"/><ellipse cx="15.3" cy="21.6" rx="4.2" ry="2.7" fill="#c69a22" transform="rotate(47 15.3 21.6)"/><ellipse cx="18.9" cy="16.6" rx="4.2" ry="2.7" fill="#f2d64a" transform="rotate(94 18.9 16.6)"/><ellipse cx="24.9" cy="15.0" rx="4.2" ry="2.7" fill="#c69a22" transform="rotate(141 24.9 15.0)"/><ellipse cx="30.4" cy="17.7" rx="4.2" ry="2.7" fill="#f2d64a" transform="rotate(8 30.4 17.7)"/><ellipse cx="33.0" cy="23.3" rx="4.2" ry="2.7" fill="#c69a22" transform="rotate(55 33.0 23.3)"/><ellipse cx="31.3" cy="29.2" rx="4.2" ry="2.7" fill="#f2d64a" transform="rotate(102 31.3 29.2)"/><ellipse cx="26.2" cy="32.7" rx="4.2" ry="2.7" fill="#c69a22" transform="rotate(149 26.2 32.7)"/><ellipse cx="20.1" cy="32.1" rx="4.2" ry="2.7" fill="#f2d64a" transform="rotate(16 20.1 32.1)"/><ellipse cx="20.7" cy="22.8" rx="4.2" ry="2.7" fill="#c69a22" transform="rotate(0 20.7 22.8)"/><ellipse cx="25.2" cy="20.7" rx="4.2" ry="2.7" fill="#f2d64a" transform="rotate(47 25.2 20.7)"/><ellipse cx="27.3" cy="25.2" rx="4.2" ry="2.7" fill="#c69a22" transform="rotate(94 27.3 25.2)"/><ellipse cx="22.8" cy="27.3" rx="4.2" ry="2.7" fill="#f2d64a" transform="rotate(141 22.8 27.3)"/></svg>
<svg style="left:907px;top:999px" width="48" height="48" viewBox="0 0 48 48"><rect width="48" height="48" fill="#ffffff"/></svg>
<svg style="left:955px;top:999px" width="48" height="48" viewBox="0 0 48 48"><rect width="48" height="48" fill="#ffffff"/><circle cx="24" cy="25" r="16.5" fill="#c6aa60" filter="url(#b2)"/><circle cx="24" cy="25" r="8" fill="#ead68c" filter="url(#b2)"/></svg>
<svg style="left:1003px;top:999px" width="48" height="48" viewBox="0 0 48 48"><rect width="48" height="48" fill="#ffffff"/><circle cx="24" cy="25" r="18.400000000000002" fill="#a8a8a6" filter="url(#b2)"/><circle cx="24" cy="25" r="16.1" fill="#66675f"/><ellipse cx="18.0" cy="15.3" rx="5.7" ry="4.8" fill="url(#stn)" transform="rotate(-30 18.0 15.3)"/><ellipse cx="29.1" cy="15.8" rx="5.5" ry="5.0" fill="url(#stn)" transform="rotate(7 29.1 15.8)"/><ellipse cx="12.0" cy="23.6" rx="4.6" ry="5.5" fill="url(#stn)" transform="rotate(-16 12.0 23.6)"/><ellipse cx="22.2" cy="24.1" rx="5.9" ry="5.5" fill="url(#stn)" transform="rotate(21 22.2 24.1)"/><ellipse cx="32.3" cy="23.6" rx="5.2" ry="5.2" fill="url(#stn)" transform="rotate(-2 32.3 23.6)"/><ellipse cx="37.8" cy="28.7" rx="2.9" ry="4.0" fill="url(#stn)" transform="rotate(-25 37.8 28.7)"/><ellipse cx="16.2" cy="33.3" rx="5.5" ry="4.8" fill="url(#stn)" transform="rotate(12 16.2 33.3)"/><ellipse cx="27.2" cy="34.2" rx="5.7" ry="4.8" fill="url(#stn)" transform="rotate(-11 27.2 34.2)"/><ellipse cx="35.0" cy="34.7" rx="3.3" ry="3.3" fill="url(#stn)" transform="rotate(26 35.0 34.7)"/><ellipse cx="23.1" cy="40.2" rx="4.2" ry="2.4" fill="url(#stn)" transform="rotate(3 23.1 40.2)"/></svg>
<svg style="left:1051px;top:999px" width="48" height="48" viewBox="0 0 48 48"><circle cx="24" cy="27" r="17" fill="#8a7a3a" filter="url(#rg2)"/><circle cx="24" cy="23" r="16.5" fill="#eef2fb" filter="url(#rg2)"/><circle cx="22" cy="20" r="9" fill="#ffffff" filter="url(#b1)"/></svg>
<svg style="left:1099px;top:999px" width="48" height="48" viewBox="0 0 48 48"><rect width="48" height="48" fill="#efe2b4"/><rect x="1" y="1" width="46" height="46" fill="none" stroke="#a98f5a" stroke-width="1.2"/><rect x="6" y="6" width="36" height="36" fill="#d9c48c" stroke="#6e5a34" stroke-width="1.6"/><rect x="8" y="8" width="32" height="5" fill="#5e4c2c"/><path d="M24 11 L38 25 L24 39 L10 25 Z" fill="#f4ecd0" stroke="#b09a64" stroke-width="0.8"/><path d="M24 17 V33 M16 25 H32" stroke="#c9b47c" stroke-width="3.2"/><path d="M24 17 V33 M16 25 H32" stroke="#f9f3dc" stroke-width="1.4"/></svg>
<svg style="left:1147px;top:999px" width="48" height="48" viewBox="0 0 48 48"><rect width="48" height="48" fill="#e49a26"/><path d="M0 2 H48 M0 46 H48 M2 0 V48 M46 0 V48" stroke="#b86a10" stroke-width="1.6" stroke-dasharray="1.2 1.2"/><rect x="4.5" y="4.5" width="39" height="39" fill="url(#carp)"/><rect x="4.5" y="4.5" width="39" height="39" fill="none" stroke="#c8741a" stroke-width="1"/></svg>
<svg style="left:1195px;top:999px" width="48" height="48" viewBox="0 0 48 48"><circle cx="24" cy="24" r="13" fill="#4f8a1c" filter="url(#b2)"/><circle cx="24" cy="24" r="7" fill="#5f9a20" filter="url(#b2)"/></svg>
<svg style="left:1243px;top:999px" width="48" height="48" viewBox="0 0 48 48"><path d="M12 12 L22 20 L34 15 M14 24 L22 20 L26 30 L38 26 M12 32 L18 27 L26 30 L30 38 M22 20 L18 27 M34 15 L36 24 L38 26 M14 24 L12 18 M26 30 L22 38" stroke="#0c0c0c" stroke-width="1.5" fill="none"/></svg>
<svg style="left:1291px;top:999px" width="48" height="48" viewBox="0 0 48 48"><circle cx="24" cy="24" r="8" fill="#8a8a8a" filter="url(#b2)" opacity="0.7"/><path d="M24 16 V32 M17 19 L31 29 M31 19 L17 29 M15 24 H33" stroke="#9a9a9a" stroke-width="0.8"/></svg>
<svg style="left:1339px;top:999px" width="48" height="48" viewBox="0 0 48 48"><circle cx="24" cy="25" r="21" fill="#b48a24"/><circle cx="24" cy="23.5" r="20.5" fill="url(#gold)"/><path d="M9 22 Q14 13 22 15 Q30 11 38 20 Q36 34 24 36 Q11 34 9 22 Z" fill="#c9a032"/><path d="M12 25 Q16 18 23 20 Q30 17 35 24 Q32 33 24 34 Q14 33 12 25 Z" fill="#ecd06a"/></svg>
<svg style="left:427px;top:1047px" width="48" height="48" viewBox="0 0 48 48"><rect x="9" y="8" width="30" height="32" fill="#2d2d2d"/><rect x="0" y="0.5" width="48" height="6.5" fill="url(#met)"/><rect x="0" y="38.5" width="48" height="6.5" fill="url(#met)"/><rect x="0" y="0" width="8" height="47" fill="url(#metv)"/><rect x="39" y="0" width="8" height="47" fill="url(#metv)"/><path d="M0 7.5 H48 M0 38 H48 M8.5 0 V47 M38.5 0 V47" stroke="#4a4a4a" stroke-width="1"/></svg>
<svg style="left:475px;top:1047px" width="48" height="48" viewBox="0 0 48 48"><rect x="0.5" width="47" height="47" fill="#f4f5fb"/><rect x="8" y="8" width="31" height="30" fill="#e4e6ee"/><circle cx="23.5" cy="24" r="15.2" fill="#363636" filter="url(#b1)"/><path d="M0.5 7.5 H47.5 M0.5 38.5 H47.5 M8 0 V47 M39 0 V47" stroke="#8a8e9a" stroke-width="1.1"/></svg>
<svg style="left:523px;top:1047px" width="48" height="48" viewBox="0 0 48 48"><rect x="29.5" y="24.5" width="9.5" height="22.5" fill="#1c1c1c"/><path d="M17.5 7 L23.8 0.5 L30 7 V44.5 Q23.8 48 17.5 44.5 Z" fill="url(#wood)"/></svg>
<svg style="left:571px;top:1047px" width="48" height="48" viewBox="0 0 48 48"><rect x="29.5" y="24.5" width="9.5" height="22.5" fill="#1c1c1c"/><path d="M18 12 L23.6 1 L29.4 12 V46 H18 Z" fill="#404040"/><path d="M18 12 L23.6 1 V46 H18 Z" fill="#8e8e8e"/><path d="M19.6 14 H27.6 V40 H19.6 Z" fill="#2a2a2a"/><path d="M18.5 41.5 H29 V46 H18.5 Z" fill="none" stroke="#d8d8d8" stroke-width="1"/><rect x="20" y="12.5" width="7" height="2" fill="#c8c8c8"/></svg>
<svg style="left:619px;top:1047px" width="48" height="48" viewBox="0 0 48 48"><rect x="29.5" y="24.5" width="9.5" height="22.5" fill="#1c1c1c"/><rect x="18.2" y="0.5" width="11" height="46" rx="1.5" fill="#e2d296"/><rect x="20.6" y="10" width="6.2" height="29" fill="#9a8548"/><rect x="22.2" y="11" width="3" height="27" fill="#eadca6"/><rect x="18.2" y="0.5" width="11" height="6" fill="#f5ecc6"/><rect x="17.6" y="40.5" width="12.2" height="5.5" fill="#d8c888"/></svg>
<svg style="left:667px;top:1047px" width="48" height="48" viewBox="0 0 48 48"><rect x="29.5" y="24.5" width="9.5" height="22.5" fill="#1c1c1c"/><path d="M17.8 7 L24 0.8 L30.2 7 V43 Q24 48.5 17.8 43 Z" fill="url(#cry)"/><ellipse cx="24" cy="26" rx="3.2" ry="5" fill="#b08a4a" opacity="0.65"/></svg>
<div style="left:1702px;top:55px;width:602px;height:1241px;background:#383838;"></div>
<div style="left:1702px;top:26.3px;width:117px;height:28.7px;background:#3c3c3c;border-radius:4px 4px 0 0;"></div>
<svg style="left:2287.5px;top:32.7px" width="4" height="14" viewBox="0 0 4 14"><circle cx="2" cy="2.4" r="1.55" fill="#d6d6d6"/><circle cx="2" cy="7" r="1.55" fill="#d6d6d6"/><circle cx="2" cy="11.6" r="1.55" fill="#d6d6d6"/></svg>
<div class="tool" style="left:1704.5px;top:58.3px;width:35.0px;height:25px;background:#434343;"></div>
<div class="tool" style="left:1743px;top:58.3px;width:35.7px;height:25px;"></div>
<div class="tool" style="left:1783.5px;top:58.3px;width:36.5px;height:25px;"></div>
<div class="tool" style="left:1824.8px;top:58.3px;width:35.8px;height:25px;"></div>
<div class="tool" style="left:1865.5px;top:58.3px;width:36.3px;height:25px;"></div>
<div class="tool" style="left:1905.6px;top:58.3px;width:36.4px;height:25px;"></div>
<div class="hdr" style="left:1702px;top:86px;width:602px;height:23.3px;"></div>
<div style="left:1702px;top:92px;width:602px;height:17px;overflow:hidden;"><svg style="left:20.4px;top:1px" width="10.4" height="9.6" viewBox="0 0 10 9"><path d="M0 0 L10 0 L5 9 Z" fill="#6e6e6e"/></svg></div>
<div class="fld" style="left:1966px;top:141px;width:328.3px;height:21px;"></div>
<div class="fld" style="left:1966px;top:169px;width:328.3px;height:21px;"></div>
<div class="fld" style="left:1989px;top:194.7px;width:132.3px;height:21.3px;"></div>
<div class="fld" style="left:2157.3px;top:194.7px;width:137.0px;height:21.3px;"></div>
<div class="btn" style="left:1970.5px;top:222.3px;width:323.8000000000002px;height:21.6px;"></div>
<div class="fld" style="left:1966px;top:252.8px;width:328.3px;height:23.2px;"></div>
<div class="hdr" style="left:1702px;top:278.4px;width:602px;height:22.6px;"></div>
<svg style="left:1722.3999999999999px;top:285.8px" width="10.4" height="9.6" viewBox="0 0 10 9"><path d="M0 0 L10 0 L5 9 Z" fill="#6e6e6e"/></svg>
<div class="btn" style="left:1742px;top:305.3px;width:272px;height:21.2px;"></div>
<div class="btn" style="left:2023px;top:305.3px;width:275.3px;height:21.2px;"></div>
<div class="hdr" style="left:1702px;top:329.5px;width:602px;height:25.0px;"></div>
<svg style="left:1722.3999999999999px;top:338.4px" width="10.4" height="9.6" viewBox="0 0 10 9"><path d="M0 0 L10 0 L5 9 Z" fill="#6e6e6e"/></svg>
<div class="hdr" style="left:1702px;top:355.6px;width:602px;height:21.2px;"></div>
<svg style="left:1745.0px;top:361.4px" width="10.4" height="9.6" viewBox="0 0 10 9"><path d="M0 0 L10 0 L5 9 Z" fill="#6e6e6e"/></svg>
<div class="chk" style="left:1771.2px;top:384.8px;width:16.8px;height:16.8px;"></div>
<div class="dbtn" style="left:1983px;top:382.3px;width:311.3000000000002px;height:21.2px;"></div>
<div class="dbtn" style="left:1983px;top:411.1px;width:311.3000000000002px;height:21.2px;"></div>
<div class="dbtn" style="left:1983px;top:439.9px;width:311.3000000000002px;height:21.2px;"></div>
<div class="dbtn" style="left:1983px;top:468.7px;width:311.3000000000002px;height:21.2px;"></div>
<div style="left:1982px;top:506.0px;width:165px;height:3px;background:#484848;border-radius:2px;"></div>
<div style="left:2120.8px;top:503.5px;width:12.4px;height:12.4px;background:#5a5a5a;border-radius:6.2px;"></div>
<div class="fld" style="left:2156.4px;top:496.3px;width:117.4px;height:20.4px;background:#2e2e2e;"></div>
<div style="left:1982px;top:532.1px;width:165px;height:3px;background:#484848;border-radius:2px;"></div>
<div style="left:2058.8px;top:529.6px;width:12.4px;height:12.4px;background:#5a5a5a;border-radius:6.2px;"></div>
<div class="fld" style="left:2156.4px;top:522.4px;width:117.4px;height:20.4px;background:#2e2e2e;"></div>
<div style="left:1982px;top:558.2px;width:165px;height:3px;background:#484848;border-radius:2px;"></div>
<div style="left:2058.8px;top:555.7px;width:12.4px;height:12.4px;background:#5a5a5a;border-radius:6.2px;"></div>
<div class="fld" style="left:2156.4px;top:548.5px;width:137.9px;height:20.4px;background:#2e2e2e;"></div>
<div class="hdr" style="left:1702px;top:572.8px;width:602px;height:21.2px;"></div>
<svg style="left:1745.0px;top:578.6px" width="10.4" height="9.6" viewBox="0 0 10 9"><path d="M0 0 L10 0 L5 9 Z" fill="#6e6e6e"/></svg>
<div class="chk" style="left:1771.2px;top:602.0px;width:16.8px;height:16.8px;"></div>
<div class="dbtn" style="left:1983px;top:599.5px;width:311.3000000000002px;height:21.2px;"></div>
<div class="dbtn" style="left:1983px;top:628.3px;width:311.3000000000002px;height:21.2px;"></div>
<div class="dbtn" style="left:1983px;top:657.1px;width:311.3000000000002px;height:21.2px;"></div>
<div class="dbtn" style="left:1983px;top:685.9px;width:311.3000000000002px;height:21.2px;"></div>
<div style="left:1982px;top:723.2px;width:165px;height:3px;background:#484848;border-radius:2px;"></div>
<div style="left:2120.8px;top:720.7px;width:12.4px;height:12.4px;background:#5a5a5a;border-radius:6.2px;"></div>
<div class="fld" style="left:2156.4px;top:713.5px;width:117.4px;height:20.4px;background:#2e2e2e;"></div>
<div style="left:1982px;top:749.3px;width:165px;height:3px;background:#484848;border-radius:2px;"></div>
<div style="left:2058.8px;top:746.8px;width:12.4px;height:12.4px;background:#5a5a5a;border-radius:6.2px;"></div>
<div class="fld" style="left:2156.4px;top:739.6px;width:117.4px;height:20.4px;background:#2e2e2e;"></div>
<div style="left:1982px;top:775.4px;width:165px;height:3px;background:#484848;border-radius:2px;"></div>
<div style="left:2058.8px;top:772.9px;width:12.4px;height:12.4px;background:#5a5a5a;border-radius:6.2px;"></div>
<div class="fld" style="left:2156.4px;top:765.7px;width:137.9px;height:20.4px;background:#2e2e2e;"></div>
<div class="hdr" style="left:1702px;top:791.7px;width:602px;height:19.8px;"></div>
<svg style="left:1722.3999999999999px;top:797.2px" width="10.4" height="9.6" viewBox="0 0 10 9"><path d="M0 0 L10 0 L5 9 Z" fill="#6e6e6e"/></svg>
<div class="chk" style="left:1970px;top:820.6px;width:16.4px;height:16.8px;"></div>
<svg style="left:21px;top:60px" width="28" height="27" viewBox="0 0 28 27"><path d="M0.5 0.5 L5.2 3 V22.6 L0.5 26.5 Z" fill="#f7f1ee"/><path d="M27.5 0.5 L22.8 3 V22.6 L27.5 26.5 Z" fill="#f7f1ee"/><path d="M6.6 3.8 H8.4 V20 L6.6 21.6 Z" fill="#f7f1ee"/><path d="M21.4 3.8 H19.6 V20 L21.4 21.6 Z" fill="#f7f1ee"/><path d="M9.8 4.4 H18.2 V18.8 L16.4 17.2 V13 H11.6 V17.2 L9.8 18.8 Z M11.6 6 V11.2 H13.2 V8.4 H14.8 V11.2 H16.4 V6 Z" fill="#f7f1ee" fill-rule="evenodd"/></svg>
<svg style="left:162px;top:62px" width="6" height="4" viewBox="0 0 6 4"><path d="M0.5 0.8 H5.5 M3 0.8 V3.6" stroke="#cfc6c2" stroke-width="0.9"/></svg>
<svg style="left:12px;top:99.5px" width="16" height="18" viewBox="0 0 16 18"><path d="M0 0 H15.6 V11.6 L9.8 17.6 H0 Z" fill="#dcdcdc"/><path d="M10.6 17.6 V12.4 H15.6 Z" fill="#dcdcdc" stroke="#4b4b4b" stroke-width="1.2"/></svg>
<svg style="left:51px;top:101px" width="22" height="16" viewBox="0 0 22 16"><path d="M0.5 3 H7 L9 5.2 H17.4 V15.4 H0.5 Z" fill="#dcdcdc"/><path d="M17 0.4 V7.4 M13.5 3.9 H20.5" stroke="#4b4b4b" stroke-width="4.4"/><path d="M17 1 V6.8 M14.1 3.9 H19.9" stroke="#dcdcdc" stroke-width="2"/></svg>
<svg style="left:92px;top:99.5px" width="19" height="18.5" viewBox="0 0 19 18.5"><path d="M0 2 Q0 0 2 0 H14.4 L18.6 4.2 V16.2 Q18.6 18.2 16.6 18.2 H2 Q0 18.2 0 16.2 Z" fill="#dcdcdc"/><rect x="4.4" y="1.6" width="8.8" height="3.6" fill="#4b4b4b"/><rect x="3.4" y="10" width="11.8" height="5.6" fill="#4b4b4b"/></svg>
<svg style="left:133px;top:99.5px" width="19" height="18.5" viewBox="0 0 19 18.5"><path d="M14.2 0.6 L18.2 4.6 L5.4 17.2 L0.5 18.3 L1.6 13.4 Z" fill="#dcdcdc"/><path d="M12 3 L16 7 M13.2 1.8 L17.2 5.8" stroke="#4b4b4b" stroke-width="0.7"/></svg>
<svg style="left:172px;top:99.5px" width="20" height="20" viewBox="0 0 20 20"><circle cx="10" cy="10" r="8.6" fill="none" stroke="#dcdcdc" stroke-width="1.8"/><path d="M7.4 5.4 L14.6 10 L7.4 14.6 Z" fill="#dcdcdc"/></svg>
<svg style="left:214px;top:98.5px" width="20" height="20" viewBox="0 0 20 20"><rect x="1.4" y="1" width="6.6" height="6.4" fill="none" stroke="#dcdcdc" stroke-width="1.3"/><path d="M3 7.4 L4.6 9 L6.2 7.4" fill="#4b4b4b" stroke="#dcdcdc" stroke-width="1.1"/><rect x="10.6" y="2" width="8" height="7.4" rx="1" fill="#dcdcdc"/><path d="M12.4 9 L14.6 11.6 L16.8 9 Z" fill="#dcdcdc"/><rect x="0.8" y="11.4" width="8" height="8" rx="1" fill="#dcdcdc"/><rect x="11.2" y="12.4" width="7" height="6.6" fill="none" stroke="#dcdcdc" stroke-width="1.3"/><path d="M13 12.8 L14.7 14.6 L16.4 12.8" fill="#4b4b4b" stroke="#dcdcdc" stroke-width="1.1"/><path d="M8.8 15.6 H11 " stroke="#dcdcdc" stroke-width="1.2"/></svg>
<svg style="left:255px;top:98.5px" width="22" height="19" viewBox="0 0 22 19"><path d="M0.6 1.2 H15.4 V18.4 H0.6 Z" fill="#e2e8e4"/><path d="M3.2 0.6 H12.8 V3.6 H3.2 Z" fill="#4b4b4b" stroke="#e2e8e4" stroke-width="0.9"/><path d="M13.6 3.6 L14.8 6.6 L19.8 7.6 L14.8 8.6 L13.6 11.6 L12.4 8.6 L8.6 7.6 L12.4 6.6 Z" fill="#e2e8e4" stroke="#4b4b4b" stroke-width="0.9"/></svg>
<svg style="left:295px;top:99px" width="21" height="20" viewBox="0 0 21 20"><circle cx="8.1" cy="7.5" r="5.7" fill="none" stroke="#dcdcdc" stroke-width="1.9"/><path d="M12.4 11.8 L18.6 17.4" stroke="#dcdcdc" stroke-width="2.8" stroke-linecap="round"/></svg>
<svg style="left:1713px;top:61.5px" width="18" height="17" viewBox="0 0 18 17"><path d="M13.6 0.4 L17.4 4.2 L4.6 15.8 L0.4 16.6 L1.2 12.2 Z" fill="#6b6b6b"/></svg>
<svg style="left:1750px;top:62px" width="25" height="16.5" viewBox="0 0 25 16.5"><rect x="0.8" y="0.8" width="23.2" height="14.8" fill="none" stroke="#dcdcdc" stroke-width="1.4" stroke-dasharray="3.4 1.6"/><rect x="3" y="3" width="18.8" height="10.4" fill="#dcdcdc"/></svg>
<svg style="left:1790px;top:60.5px" width="25" height="19" viewBox="0 0 25 19"><ellipse cx="12.6" cy="9.6" rx="11.6" ry="8.6" fill="none" stroke="#dcdcdc" stroke-width="1.4" stroke-dasharray="3.2 1.8"/><ellipse cx="12.6" cy="9.6" rx="9.4" ry="6.7" fill="#dcdcdc"/></svg>
<svg style="left:1831px;top:59.5px" width="23" height="22" viewBox="0 0 23 22"><g transform="rotate(45 11.5 11)"><rect x="9.6" y="-3.2" width="3.8" height="9.4" rx="1.9" fill="#dcdcdc"/><circle cx="11.5" cy="-1" r="0.9" fill="#4b4b4b"/><path d="M5.6 6 H17.4 V9 H5.6 Z" fill="#dcdcdc"/><path d="M5.6 10.2 H17.4 V18.2 L15.2 20.4 L13.6 18.2 L11.5 20.8 L9.4 18.2 L7.8 20.4 L5.6 18.2 Z" fill="#dcdcdc"/></g></svg>
<svg style="left:1873px;top:60.5px" width="23" height="20" viewBox="0 0 23 20"><path d="M21.8 0.6 Q22.6 1.4 21.4 3 L11.2 15 L7.6 12 L19.2 1 Q20.8 -0.2 21.8 0.6 Z" fill="#dcdcdc"/><path d="M6.6 13 L10.2 16 Q8.6 19.6 3.4 18.8 Q5.6 17.6 6.6 13 Z" fill="#dcdcdc"/><circle cx="1.6" cy="14.6" r="1.1" fill="#dcdcdc"/></svg>
<svg style="left:1915px;top:61px" width="21" height="21" viewBox="0 0 21 21"><g transform="rotate(-40 10 9)"><rect x="1.6" y="3.2" width="17.6" height="10.6" rx="1.2" fill="#dcdcdc"/><rect x="2.8" y="4.4" width="4.4" height="8.2" fill="#4b4b4b" stroke="#dcdcdc" stroke-width="0.6"/></g><path d="M7.2 19.4 H20.4" stroke="#dcdcdc" stroke-width="1.6"/></svg>
<div style="left:0;top:0;width:2304px;height:1296px;will-change:transform;"><svg style="left:24px;top:0.7px" width="84.9" height="24"><text x="0" y="17.1" textLength="84.9" lengthAdjust="spacingAndGlyphs" fill="#d4d4d4" font-size="13.2">RPG シーン マップ</text></svg><svg style="left:10.4px;top:30px" width="38.6" height="24"><text x="0" y="17.1" textLength="38.6" lengthAdjust="spacingAndGlyphs" fill="#bdbdbd" font-size="14.4">メニュー</text></svg><svg style="left:10px;top:128.3px" width="30" height="24"><text x="0" y="17.1" textLength="30" lengthAdjust="spacingAndGlyphs" fill="#bdbdbd" font-size="14.4">マップ</text></svg><svg style="left:5.5px;top:161.8px" width="58.5" height="24"><text x="0" y="17.1" textLength="58.5" lengthAdjust="spacingAndGlyphs" fill="#e8e8e8" font-size="14.4">マップ編集</text></svg><svg style="left:76px;top:161.8px" width="60.5" height="24"><text x="0" y="17.1" textLength="60.5" lengthAdjust="spacingAndGlyphs" fill="#d8d8d8" font-size="14.4">バトル編集</text></svg><svg style="left:147.5px;top:161.8px" width="42.0" height="24"><text x="0" y="17.1" textLength="42.0" lengthAdjust="spacingAndGlyphs" fill="#d8d8d8" font-size="14.4">イベント</text></svg><svg style="left:206.2px;top:161.8px" width="36.8" height="24"><text x="0" y="17.1" textLength="36.8" lengthAdjust="spacingAndGlyphs" fill="#e0e0e0" font-size="14.4">menu</text></svg><svg style="left:31.7px;top:192.0px" width="55.3" height="24"><text x="0" y="17.1" textLength="55.3" lengthAdjust="spacingAndGlyphs" fill="#e2e2e2" font-size="14.4">MAP001</text></svg><svg style="left:31.7px;top:216.6px" width="43.3" height="24"><text x="0" y="17.1" textLength="43.3" lengthAdjust="spacingAndGlyphs" fill="#e2e2e2" font-size="14.4">#0002</text></svg><svg style="left:81.2px;top:216.6px" width="70.2" height="24"><text x="0" y="17.1" textLength="70.2" lengthAdjust="spacingAndGlyphs" fill="#e2e2e2" font-size="14.4">名称未設定</text></svg><svg style="left:31.7px;top:240.6px" width="43.3" height="24"><text x="0" y="17.1" textLength="43.3" lengthAdjust="spacingAndGlyphs" fill="#e2e2e2" font-size="14.4">#0003</text></svg><svg style="left:81.2px;top:240.6px" width="70.2" height="24"><text x="0" y="17.1" textLength="70.2" lengthAdjust="spacingAndGlyphs" fill="#e2e2e2" font-size="14.4">名称未設定</text></svg><svg style="left:31.7px;top:264.6px" width="43.3" height="24"><text x="0" y="17.1" textLength="43.3" lengthAdjust="spacingAndGlyphs" fill="#e2e2e2" font-size="14.4">#0004</text></svg><svg style="left:81.2px;top:264.6px" width="70.2" height="24"><text x="0" y="17.1" textLength="70.2" lengthAdjust="spacingAndGlyphs" fill="#e2e2e2" font-size="14.4">名称未設定</text></svg><svg style="left:31.7px;top:288.6px" width="43.3" height="24"><text x="0" y="17.1" textLength="43.3" lengthAdjust="spacingAndGlyphs" fill="#e2e2e2" font-size="14.4">#0005</text></svg><svg style="left:81.2px;top:288.6px" width="70.2" height="24"><text x="0" y="17.1" textLength="70.2" lengthAdjust="spacingAndGlyphs" fill="#e2e2e2" font-size="14.4">名称未設定</text></svg><svg style="left:31.7px;top:312.6px" width="43.3" height="24"><text x="0" y="17.1" textLength="43.3" lengthAdjust="spacingAndGlyphs" fill="#ffffff" font-size="14.4">#0006</text></svg><svg style="left:81.2px;top:312.6px" width="70.2" height="24"><text x="0" y="17.1" textLength="70.2" lengthAdjust="spacingAndGlyphs" fill="#ffffff" font-size="14.4">名称未設定</text></svg><svg style="left:31.7px;top:336.6px" width="43.3" height="24"><text x="0" y="17.1" textLength="43.3" lengthAdjust="spacingAndGlyphs" fill="#e2e2e2" font-size="14.4">#0007</text></svg><svg style="left:81.2px;top:336.6px" width="70.2" height="24"><text x="0" y="17.1" textLength="70.2" lengthAdjust="spacingAndGlyphs" fill="#e2e2e2" font-size="14.4">名称未設定</text></svg><svg style="left:31.7px;top:360.6px" width="43.3" height="24"><text x="0" y="17.1" textLength="43.3" lengthAdjust="spacingAndGlyphs" fill="#e2e2e2" font-size="14.4">#0008</text></svg><svg style="left:81.2px;top:360.6px" width="70.2" height="24"><text x="0" y="17.1" textLength="70.2" lengthAdjust="spacingAndGlyphs" fill="#e2e2e2" font-size="14.4">名称未設定</text></svg><svg style="left:31.7px;top:384.6px" width="43.3" height="24"><text x="0" y="17.1" textLength="43.3" lengthAdjust="spacingAndGlyphs" fill="#e2e2e2" font-size="14.4">#0009</text></svg><svg style="left:81.2px;top:384.6px" width="70.2" height="24"><text x="0" y="17.1" textLength="70.2" lengthAdjust="spacingAndGlyphs" fill="#e2e2e2" font-size="14.4">名称未設定</text></svg><svg style="left:31.7px;top:408.6px" width="41.0" height="24"><text x="0" y="17.1" textLength="41.0" lengthAdjust="spacingAndGlyphs" fill="#e2e2e2" font-size="14.4">#0010</text></svg><svg style="left:78.9px;top:408.6px" width="70.2" height="24"><text x="0" y="17.1" textLength="70.2" lengthAdjust="spacingAndGlyphs" fill="#e2e2e2" font-size="14.4">名称未設定</text></svg><svg style="left:31.7px;top:432.6px" width="38.7" height="24"><text x="0" y="17.1" textLength="38.7" lengthAdjust="spacingAndGlyphs" fill="#e2e2e2" font-size="14.4">#0011</text></svg><svg style="left:76.6px;top:432.6px" width="70.2" height="24"><text x="0" y="17.1" textLength="70.2" lengthAdjust="spacingAndGlyphs" fill="#e2e2e2" font-size="14.4">名称未設定</text></svg><svg style="left:31.7px;top:456.6px" width="41.0" height="24"><text x="0" y="17.1" textLength="41.0" lengthAdjust="spacingAndGlyphs" fill="#e2e2e2" font-size="14.4">#0012</text></svg><svg style="left:78.9px;top:456.6px" width="70.2" height="24"><text x="0" y="17.1" textLength="70.2" lengthAdjust="spacingAndGlyphs" fill="#e2e2e2" font-size="14.4">名称未設定</text></svg><svg style="left:31.7px;top:480.6px" width="41.0" height="24"><text x="0" y="17.1" textLength="41.0" lengthAdjust="spacingAndGlyphs" fill="#e2e2e2" font-size="14.4">#0013</text></svg><svg style="left:78.9px;top:480.6px" width="70.2" height="24"><text x="0" y="17.1" textLength="70.2" lengthAdjust="spacingAndGlyphs" fill="#e2e2e2" font-size="14.4">名称未設定</text></svg><svg style="left:31.7px;top:504.6px" width="41.0" height="24"><text x="0" y="17.1" textLength="41.0" lengthAdjust="spacingAndGlyphs" fill="#e2e2e2" font-size="14.4">#0014</text></svg><svg style="left:78.9px;top:504.6px" width="70.2" height="24"><text x="0" y="17.1" textLength="70.2" lengthAdjust="spacingAndGlyphs" fill="#e2e2e2" font-size="14.4">名称未設定</text></svg><svg style="left:31.7px;top:528.6px" width="41.0" height="24"><text x="0" y="17.1" textLength="41.0" lengthAdjust="spacingAndGlyphs" fill="#e2e2e2" font-size="14.4">#0015</text></svg><svg style="left:78.9px;top:528.6px" width="70.2" height="24"><text x="0" y="17.1" textLength="70.2" lengthAdjust="spacingAndGlyphs" fill="#e2e2e2" font-size="14.4">名称未設定</text></svg><svg style="left:31.7px;top:552.6px" width="41.0" height="24"><text x="0" y="17.1" textLength="41.0" lengthAdjust="spacingAndGlyphs" fill="#e2e2e2" font-size="14.4">#0016</text></svg><svg style="left:78.9px;top:552.6px" width="70.2" height="24"><text x="0" y="17.1" textLength="70.2" lengthAdjust="spacingAndGlyphs" fill="#e2e2e2" font-size="14.4">名称未設定</text></svg><svg style="left:31.7px;top:576.6px" width="41.0" height="24"><text x="0" y="17.1" textLength="41.0" lengthAdjust="spacingAndGlyphs" fill="#e2e2e2" font-size="14.4">#0017</text></svg><svg style="left:78.9px;top:576.6px" width="70.2" height="24"><text x="0" y="17.1" textLength="70.2" lengthAdjust="spacingAndGlyphs" fill="#e2e2e2" font-size="14.4">名称未設定</text></svg><svg style="left:31.7px;top:600.6px" width="41.0" height="24"><text x="0" y="17.1" textLength="41.0" lengthAdjust="spacingAndGlyphs" fill="#e2e2e2" font-size="14.4">#0018</text></svg><svg style="left:78.9px;top:600.6px" width="70.2" height="24"><text x="0" y="17.1" textLength="70.2" lengthAdjust="spacingAndGlyphs" fill="#e2e2e2" font-size="14.4">名称未設定</text></svg><svg style="left:10.5px;top:706.4px" width="63.7" height="24"><text x="0" y="17.1" textLength="63.7" lengthAdjust="spacingAndGlyphs" fill="#c4c4c4" font-size="14.4">RPG Data</text></svg><div style="left:48px;top:732px;width:360px;height:12px;overflow:hidden;"><svg style="left:43.8px;top:-11px" width="61" height="24"><text x="0" y="17.1" textLength="61" lengthAdjust="spacingAndGlyphs" fill="#cfcfcf" font-size="14.4">キャラクター</text></svg></div><svg style="left:91.7px;top:747.0px" width="72.6" height="24"><text x="0" y="17.1" textLength="72.6" lengthAdjust="spacingAndGlyphs" fill="#d0d0d0" font-size="14.4">バトルの編集</text></svg><svg style="left:91.7px;top:773.5px" width="70.8" height="24"><text x="0" y="17.1" textLength="70.8" lengthAdjust="spacingAndGlyphs" fill="#d0d0d0" font-size="14.4">サウンド設定</text></svg><svg style="left:91.7px;top:800.0px" width="72.6" height="24"><text x="0" y="17.1" textLength="72.6" lengthAdjust="spacingAndGlyphs" fill="#d0d0d0" font-size="14.4">スキルの編集</text></svg><svg style="left:91.7px;top:826.4px" width="80.1" height="24"><text x="0" y="17.1" textLength="80.1" lengthAdjust="spacingAndGlyphs" fill="#d0d0d0" font-size="14.4">ステートの編集</text></svg><svg style="left:91.7px;top:852.8px" width="118.3" height="24"><text x="0" y="17.1" textLength="118.3" lengthAdjust="spacingAndGlyphs" fill="#d0d0d0" font-size="14.4">装備･アイテムの編集</text></svg><svg style="left:91.7px;top:879.0px" width="71.3" height="24"><text x="0" y="17.1" textLength="71.3" lengthAdjust="spacingAndGlyphs" fill="#d0d0d0" font-size="14.4">タイプの編集</text></svg><svg style="left:91.7px;top:905.5px" width="82.6" height="24"><text x="0" y="17.1" textLength="82.6" lengthAdjust="spacingAndGlyphs" fill="#d0d0d0" font-size="14.4">バトルエフェクト</text></svg><svg style="left:91.7px;top:932.0px" width="73.3" height="24"><text x="0" y="17.1" textLength="73.3" lengthAdjust="spacingAndGlyphs" fill="#d0d0d0" font-size="14.4">コモンイベント</text></svg><svg style="left:91.7px;top:958.3px" width="56.3" height="24"><text x="0" y="17.1" textLength="56.3" lengthAdjust="spacingAndGlyphs" fill="#d0d0d0" font-size="14.4">素材管理</text></svg><svg style="left:91.7px;top:984.8px" width="40.1" height="24"><text x="0" y="17.1" textLength="40.1" lengthAdjust="spacingAndGlyphs" fill="#d0d0d0" font-size="14.4">スイッチ</text></svg><svg style="left:91.7px;top:1011.0px" width="27.8" height="24"><text x="0" y="17.1" textLength="27.8" lengthAdjust="spacingAndGlyphs" fill="#d0d0d0" font-size="14.4">変数</text></svg><svg style="left:91.7px;top:1037.0px" width="74.6" height="24"><text x="0" y="17.1" textLength="74.6" lengthAdjust="spacingAndGlyphs" fill="#d0d0d0" font-size="14.4">サンプルマップ</text></svg><svg style="left:91.7px;top:1063.5px" width="58.8" height="24"><text x="0" y="17.1" textLength="58.8" lengthAdjust="spacingAndGlyphs" fill="#d0d0d0" font-size="14.4">マップ設定</text></svg><svg style="left:123.8px;top:1089.4px" width="104.2" height="24"><text x="0" y="17.1" textLength="104.2" lengthAdjust="spacingAndGlyphs" fill="#d0d0d0" font-size="14.4">タイルデータの登録</text></svg><svg style="left:127.5px;top:1115.1px" width="74.5" height="24"><text x="0" y="17.1" textLength="74.5" lengthAdjust="spacingAndGlyphs" fill="#d0d0d0" font-size="14.4">タイルグループ</text></svg><svg style="left:146.7px;top:1139.8px" width="61.3" height="24"><text x="0" y="17.1" textLength="61.3" lengthAdjust="spacingAndGlyphs" fill="#e2e2e2" font-size="14.4">World_A1</text></svg><svg style="left:146.7px;top:1163.8px" width="62.8" height="24"><text x="0" y="17.1" textLength="62.8" lengthAdjust="spacingAndGlyphs" fill="#e2e2e2" font-size="14.4">World_A2</text></svg><svg style="left:146.7px;top:1187.8px" width="54.1" height="24"><text x="0" y="17.1" textLength="54.1" lengthAdjust="spacingAndGlyphs" fill="#e2e2e2" font-size="14.4">World_B</text></svg><svg style="left:146.7px;top:1211.8px" width="75.1" height="24"><text x="0" y="17.1" textLength="75.1" lengthAdjust="spacingAndGlyphs" fill="#e2e2e2" font-size="14.4">Outside_A1</text></svg><svg style="left:146.7px;top:1235.8px" width="76.6" height="24"><text x="0" y="17.1" textLength="76.6" lengthAdjust="spacingAndGlyphs" fill="#e2e2e2" font-size="14.4">Outside_A2</text></svg><svg style="left:146.7px;top:1259.8px" width="77.1" height="24"><text x="0" y="17.1" textLength="77.1" lengthAdjust="spacingAndGlyphs" fill="#e2e2e2" font-size="14.4">Outside_A3</text></svg><svg style="left:146.7px;top:1283.8px" width="77.6" height="24"><text x="0" y="17.1" textLength="77.6" lengthAdjust="spacingAndGlyphs" fill="#e2e2e2" font-size="14.4">Outside_A4</text></svg><svg style="left:458.5px;top:29.8px" width="31.0" height="24"><text x="0" y="17.1" textLength="31.0" lengthAdjust="spacingAndGlyphs" fill="#c8c8c8" font-size="14.4">ゲーム</text></svg><svg style="left:535.5px;top:29.8px" width="117.0" height="24"><text x="0" y="17.1" textLength="117.0" lengthAdjust="spacingAndGlyphs" fill="#c8c8c8" font-size="14.4">RPG シーン プレビュー</text></svg><svg style="left:689px;top:29.8px" width="99.6" height="24"><text x="0" y="17.1" textLength="99.6" lengthAdjust="spacingAndGlyphs" fill="#d2d2d2" font-size="14.4">RPG シーン マップ</text></svg><svg style="left:1583px;top:937px" width="32" height="24"><text x="0" y="17.1" textLength="32" lengthAdjust="spacingAndGlyphs" fill="#dcdcdc" font-size="14.4">座標:</text></svg><svg style="left:1673.3px;top:937px" width="18.2" height="24"><text x="0" y="17.1" textLength="18.2" lengthAdjust="spacingAndGlyphs" fill="#e6e6e6" font-size="14.4">2,1</text></svg><svg style="left:478px;top:961.8px" width="27.6" height="24"><text x="0" y="17.1" textLength="27.6" lengthAdjust="spacingAndGlyphs" fill="#505050" font-size="14.4">遠景</text></svg><svg style="left:608.8px;top:961.8px" width="26.5" height="24"><text x="0" y="17.1" textLength="26.5" lengthAdjust="spacingAndGlyphs" fill="#505050" font-size="14.4">背景</text></svg><svg style="left:737.2px;top:961.8px" width="90.8" height="24"><text x="0" y="17.1" textLength="90.8" lengthAdjust="spacingAndGlyphs" fill="#505050" font-size="14.4">コリジョンの配置</text></svg><svg style="left:930px;top:961.8px" width="9.8" height="24"><text x="0" y="17.1" textLength="9.8" lengthAdjust="spacingAndGlyphs" fill="#f4f4f4" font-size="14.4">A</text></svg><svg style="left:1040.4px;top:961.8px" width="9.0" height="24"><text x="0" y="17.1" textLength="9.0" lengthAdjust="spacingAndGlyphs" fill="#505050" font-size="14.4">B</text></svg><svg style="left:1150.6px;top:961.8px" width="36.0" height="24"><text x="0" y="17.1" textLength="36.0" lengthAdjust="spacingAndGlyphs" fill="#505050" font-size="14.4">影ペン</text></svg><svg style="left:1288px;top:961.8px" width="9.8" height="24"><text x="0" y="17.1" textLength="9.8" lengthAdjust="spacingAndGlyphs" fill="#505050" font-size="14.4">C</text></svg><svg style="left:1399.4px;top:961.8px" width="9.6" height="24"><text x="0" y="17.1" textLength="9.6" lengthAdjust="spacingAndGlyphs" fill="#505050" font-size="14.4">D</text></svg><svg style="left:1483.4px;top:959.6px" width="124.3" height="24"><text x="0" y="17.1" textLength="124.3" lengthAdjust="spacingAndGlyphs" fill="#d4d4d4" font-size="14.4">このレイヤーを表示する</text></svg><svg style="left:1483.4px;top:983.5px" width="164.8" height="24"><text x="0" y="17.1" textLength="164.8" lengthAdjust="spacingAndGlyphs" fill="#d4d4d4" font-size="14.4">選択中のレイヤーの強調表示</text></svg><svg style="left:1543.7px;top:1009.2px" width="72.1" height="24"><text x="0" y="17.1" textLength="72.1" lengthAdjust="spacingAndGlyphs" fill="#e4e4e4" font-size="14.4">タイルの追加</text></svg><svg style="left:1522.3px;top:1035.7px" width="114.7" height="24"><text x="0" y="17.1" textLength="114.7" lengthAdjust="spacingAndGlyphs" fill="#e4e4e4" font-size="14.4">タイルグループの保存</text></svg><svg style="left:1522.3px;top:1062.2px" width="114.7" height="24"><text x="0" y="17.1" textLength="114.7" lengthAdjust="spacingAndGlyphs" fill="#e4e4e4" font-size="14.4">タイルグループの読込</text></svg><svg style="left:1535.3px;top:1088.3px" width="88.7" height="24"><text x="0" y="17.1" textLength="88.7" lengthAdjust="spacingAndGlyphs" fill="#e4e4e4" font-size="14.4">エフェクトの配置</text></svg><svg style="left:1712.6px;top:29.7px" width="81.6" height="24"><text x="0" y="17.1" textLength="81.6" lengthAdjust="spacingAndGlyphs" fill="#cfcfcf" font-size="14.4">RPG Setting</text></svg><div style="left:1702px;top:92px;width:602px;height:17px;overflow:hidden;"><svg style="left:46.3px;top:-6.5px" width="56" height="24"><text x="0" y="17.1" textLength="56" lengthAdjust="spacingAndGlyphs" fill="#d6d6d6" font-size="14.4">基本設定</text></svg></div><svg style="left:1748.3px;top:112px" width="13.7" height="24"><text x="0" y="17.1" textLength="13.7" lengthAdjust="spacingAndGlyphs" fill="#dadada" font-size="14.4">ID</text></svg><svg style="left:1967.8px;top:110.7px" width="34.9" height="24"><text x="0" y="17.1" textLength="34.9" lengthAdjust="spacingAndGlyphs" fill="#e6e6e6" font-size="14.4">0006</text></svg><svg style="left:1748.8px;top:138px" width="27.2" height="24"><text x="0" y="17.1" textLength="27.2" lengthAdjust="spacingAndGlyphs" fill="#d6d6d6" font-size="14.4">名前</text></svg><svg style="left:1970px;top:140.8px" width="43.3" height="24"><text x="0" y="17.1" textLength="43.3" lengthAdjust="spacingAndGlyphs" fill="#d6d6d6" font-size="14.4">#0006</text></svg><svg style="left:2019.5px;top:140.8px" width="71.1" height="24"><text x="0" y="17.1" textLength="71.1" lengthAdjust="spacingAndGlyphs" fill="#d6d6d6" font-size="14.4">名称未設定</text></svg><svg style="left:1748.8px;top:166.4px" width="41.7" height="24"><text x="0" y="17.1" textLength="41.7" lengthAdjust="spacingAndGlyphs" fill="#d6d6d6" font-size="14.4">表示名</text></svg><svg style="left:1748.8px;top:194px" width="32.2" height="24"><text x="0" y="17.1" textLength="32.2" lengthAdjust="spacingAndGlyphs" fill="#d6d6d6" font-size="14.4">サイズ</text></svg><svg style="left:1967.8px;top:194px" width="13.8" height="24"><text x="0" y="17.1" textLength="13.8" lengthAdjust="spacingAndGlyphs" fill="#d6d6d6" font-size="14.4">幅</text></svg><svg style="left:1995px;top:194px" width="14.5" height="24"><text x="0" y="17.1" textLength="14.5" lengthAdjust="spacingAndGlyphs" fill="#e0e0e0" font-size="14.4">10</text></svg><svg style="left:2127.5px;top:194px" width="23.8" height="24"><text x="0" y="17.1" textLength="23.8" lengthAdjust="spacingAndGlyphs" fill="#d6d6d6" font-size="14.4">高さ</text></svg><svg style="left:2163.2px;top:194px" width="15.3" height="24"><text x="0" y="17.1" textLength="15.3" lengthAdjust="spacingAndGlyphs" fill="#e0e0e0" font-size="14.4">10</text></svg><svg style="left:1748.8px;top:221.6px" width="85.0" height="24"><text x="0" y="17.1" textLength="85.0" lengthAdjust="spacingAndGlyphs" fill="#d6d6d6" font-size="14.4">スクロールタイプ</text></svg><svg style="left:2074.7px;top:221.6px" width="110.9" height="24"><text x="0" y="17.1" textLength="110.9" lengthAdjust="spacingAndGlyphs" fill="#e6e6e6" font-size="14.4">0001 : ループしない</text></svg><svg style="left:1748.8px;top:250.6px" width="19.8" height="24"><text x="0" y="17.1" textLength="19.8" lengthAdjust="spacingAndGlyphs" fill="#d6d6d6" font-size="14.4">メモ</text></svg><svg style="left:1748px;top:277.8px" width="95.8" height="24"><text x="0" y="17.1" textLength="95.8" lengthAdjust="spacingAndGlyphs" fill="#d6d6d6" font-size="14.4">サムネイルの更新</text></svg><svg style="left:1830.6px;top:304.2px" width="95.5" height="24"><text x="0" y="17.1" textLength="95.5" lengthAdjust="spacingAndGlyphs" fill="#e4e4e4" font-size="14.4">サムネイルの更新</text></svg><svg style="left:2111.7px;top:304.2px" width="98.9" height="24"><text x="0" y="17.1" textLength="98.9" lengthAdjust="spacingAndGlyphs" fill="#e4e4e4" font-size="14.4">マップの画像出力</text></svg><svg style="left:1748px;top:330.4px" width="42.5" height="24"><text x="0" y="17.1" textLength="42.5" lengthAdjust="spacingAndGlyphs" fill="#d6d6d6" font-size="14.4">サウンド</text></svg><svg style="left:1770.4px;top:353.4px" width="32.0" height="24"><text x="0" y="17.1" textLength="32.0" lengthAdjust="spacingAndGlyphs" fill="#d6d6d6" font-size="14.4">BGM</text></svg><svg style="left:1793.1px;top:381.4px" width="89.8" height="24"><text x="0" y="17.1" textLength="89.8" lengthAdjust="spacingAndGlyphs" fill="#d6d6d6" font-size="14.4">BGM自動演奏</text></svg><svg style="left:2102.4px;top:381.4px" width="67.9" height="24"><text x="0" y="17.1" textLength="67.9" lengthAdjust="spacingAndGlyphs" fill="#8a8a8a" font-size="14.4">0001 : なし</text></svg><svg style="left:2110.4px;top:410.2px" width="51.4" height="24"><text x="0" y="17.1" textLength="51.4" lengthAdjust="spacingAndGlyphs" fill="#8a8a8a" font-size="14.4">インポート</text></svg><svg style="left:2122.2px;top:439.0px" width="27.8" height="24"><text x="0" y="17.1" textLength="27.8" lengthAdjust="spacingAndGlyphs" fill="#8a8a8a" font-size="14.4">再生</text></svg><svg style="left:2122.2px;top:467.8px" width="27.8" height="24"><text x="0" y="17.1" textLength="27.8" lengthAdjust="spacingAndGlyphs" fill="#8a8a8a" font-size="14.4">停止</text></svg><svg style="left:1769.4px;top:496.7px" width="27.4" height="24"><text x="0" y="17.1" textLength="27.4" lengthAdjust="spacingAndGlyphs" fill="#777777" font-size="14.4">音量</text></svg><svg style="left:2161.8px;top:495.5px" width="17.2" height="24"><text x="0" y="17.1" textLength="17.2" lengthAdjust="spacingAndGlyphs" fill="#8a8a8a" font-size="14.4">90</text></svg><svg style="left:2280.6px;top:495.1px" width="12.4" height="24"><text x="0" y="17.1" textLength="12.4" lengthAdjust="spacingAndGlyphs" fill="#8a8a8a" font-size="14.4">%</text></svg><svg style="left:1769.4px;top:522.8px" width="29.5" height="24"><text x="0" y="17.1" textLength="29.5" lengthAdjust="spacingAndGlyphs" fill="#777777" font-size="14.4">ピッチ</text></svg><svg style="left:2161.8px;top:521.6px" width="24.3" height="24"><text x="0" y="17.1" textLength="24.3" lengthAdjust="spacingAndGlyphs" fill="#8a8a8a" font-size="14.4">100</text></svg><svg style="left:2280.6px;top:521.2px" width="12.4" height="24"><text x="0" y="17.1" textLength="12.4" lengthAdjust="spacingAndGlyphs" fill="#8a8a8a" font-size="14.4">%</text></svg><svg style="left:1769.4px;top:548.9px" width="27.4" height="24"><text x="0" y="17.1" textLength="27.4" lengthAdjust="spacingAndGlyphs" fill="#777777" font-size="14.4">位相</text></svg><svg style="left:2161.8px;top:547.7px" width="8.5" height="24"><text x="0" y="17.1" textLength="8.5" lengthAdjust="spacingAndGlyphs" fill="#8a8a8a" font-size="14.4">0</text></svg><svg style="left:1770.4px;top:570.6px" width="28.0" height="24"><text x="0" y="17.1" textLength="28.0" lengthAdjust="spacingAndGlyphs" fill="#d6d6d6" font-size="14.4">BGS</text></svg><svg style="left:1793.1px;top:598.6px" width="85.8" height="24"><text x="0" y="17.1" textLength="85.8" lengthAdjust="spacingAndGlyphs" fill="#d6d6d6" font-size="14.4">BGS自動演奏</text></svg><svg style="left:2102.4px;top:598.6px" width="67.9" height="24"><text x="0" y="17.1" textLength="67.9" lengthAdjust="spacingAndGlyphs" fill="#8a8a8a" font-size="14.4">0001 : なし</text></svg><svg style="left:2110.4px;top:627.4px" width="51.4" height="24"><text x="0" y="17.1" textLength="51.4" lengthAdjust="spacingAndGlyphs" fill="#8a8a8a" font-size="14.4">インポート</text></svg><svg style="left:2122.2px;top:656.2px" width="27.8" height="24"><text x="0" y="17.1" textLength="27.8" lengthAdjust="spacingAndGlyphs" fill="#8a8a8a" font-size="14.4">再生</text></svg><svg style="left:2122.2px;top:685.0px" width="27.8" height="24"><text x="0" y="17.1" textLength="27.8" lengthAdjust="spacingAndGlyphs" fill="#8a8a8a" font-size="14.4">停止</text></svg><svg style="left:1769.4px;top:713.9px" width="27.4" height="24"><text x="0" y="17.1" textLength="27.4" lengthAdjust="spacingAndGlyphs" fill="#777777" font-size="14.4">音量</text></svg><svg style="left:2161.8px;top:712.7px" width="17.2" height="24"><text x="0" y="17.1" textLength="17.2" lengthAdjust="spacingAndGlyphs" fill="#8a8a8a" font-size="14.4">90</text></svg><svg style="left:2280.6px;top:712.3px" width="12.4" height="24"><text x="0" y="17.1" textLength="12.4" lengthAdjust="spacingAndGlyphs" fill="#8a8a8a" font-size="14.4">%</text></svg><svg style="left:1769.4px;top:740.0px" width="29.5" height="24"><text x="0" y="17.1" textLength="29.5" lengthAdjust="spacingAndGlyphs" fill="#777777" font-size="14.4">ピッチ</text></svg><svg style="left:2161.8px;top:738.8px" width="24.3" height="24"><text x="0" y="17.1" textLength="24.3" lengthAdjust="spacingAndGlyphs" fill="#8a8a8a" font-size="14.4">100</text></svg><svg style="left:2280.6px;top:738.4px" width="12.4" height="24"><text x="0" y="17.1" textLength="12.4" lengthAdjust="spacingAndGlyphs" fill="#8a8a8a" font-size="14.4">%</text></svg><svg style="left:1769.4px;top:766.1px" width="27.4" height="24"><text x="0" y="17.1" textLength="27.4" lengthAdjust="spacingAndGlyphs" fill="#777777" font-size="14.4">位相</text></svg><svg style="left:2161.8px;top:764.9px" width="8.5" height="24"><text x="0" y="17.1" textLength="8.5" lengthAdjust="spacingAndGlyphs" fill="#8a8a8a" font-size="14.4">0</text></svg><svg style="left:1748px;top:789.2px" width="68" height="24"><text x="0" y="17.1" textLength="68" lengthAdjust="spacingAndGlyphs" fill="#d6d6d6" font-size="14.4">ダッシュ禁止</text></svg><svg style="left:1748.8px;top:816.8px" width="68.1" height="24"><text x="0" y="17.1" textLength="68.1" lengthAdjust="spacingAndGlyphs" fill="#d6d6d6" font-size="14.4">ダッシュ禁止</text></svg><svg style="left:1992.1px;top:816.8px" width="27.2" height="24"><text x="0" y="17.1" textLength="27.2" lengthAdjust="spacingAndGlyphs" fill="#d6d6d6" font-size="14.4">禁止</text></svg><div style="left:54px;top:59px;height:30px;line-height:30px;white-space:nowrap;font-weight:bold;font-size:20.5px;color:#fbf7f5;letter-spacing:-0.55px;transform-origin:0 50%;transform:scaleX(0.93);">RPG MAKER</div><div style="left:169px;top:59px;height:30px;line-height:30px;white-space:nowrap;font-size:20.5px;color:#9a9090;letter-spacing:-1.6px;transform-origin:0 50%;transform:scaleX(0.93);-webkit-text-stroke:0;">UNITE</div><div style="left:327px;top:96px;width:37px;height:26px;line-height:27px;text-align:center;font-size:21.5px;font-weight:bold;color:#dcdcdc;">?</div></div>
<svg style="left:0;top:0" width="2304" height="1296" viewBox="0 0 2304 1296"><rect x="1712.1" y="94.1" width="577.6" height="1137.4" fill="none" stroke="#f80404" stroke-width="4.2"/></svg>

</body></html>
